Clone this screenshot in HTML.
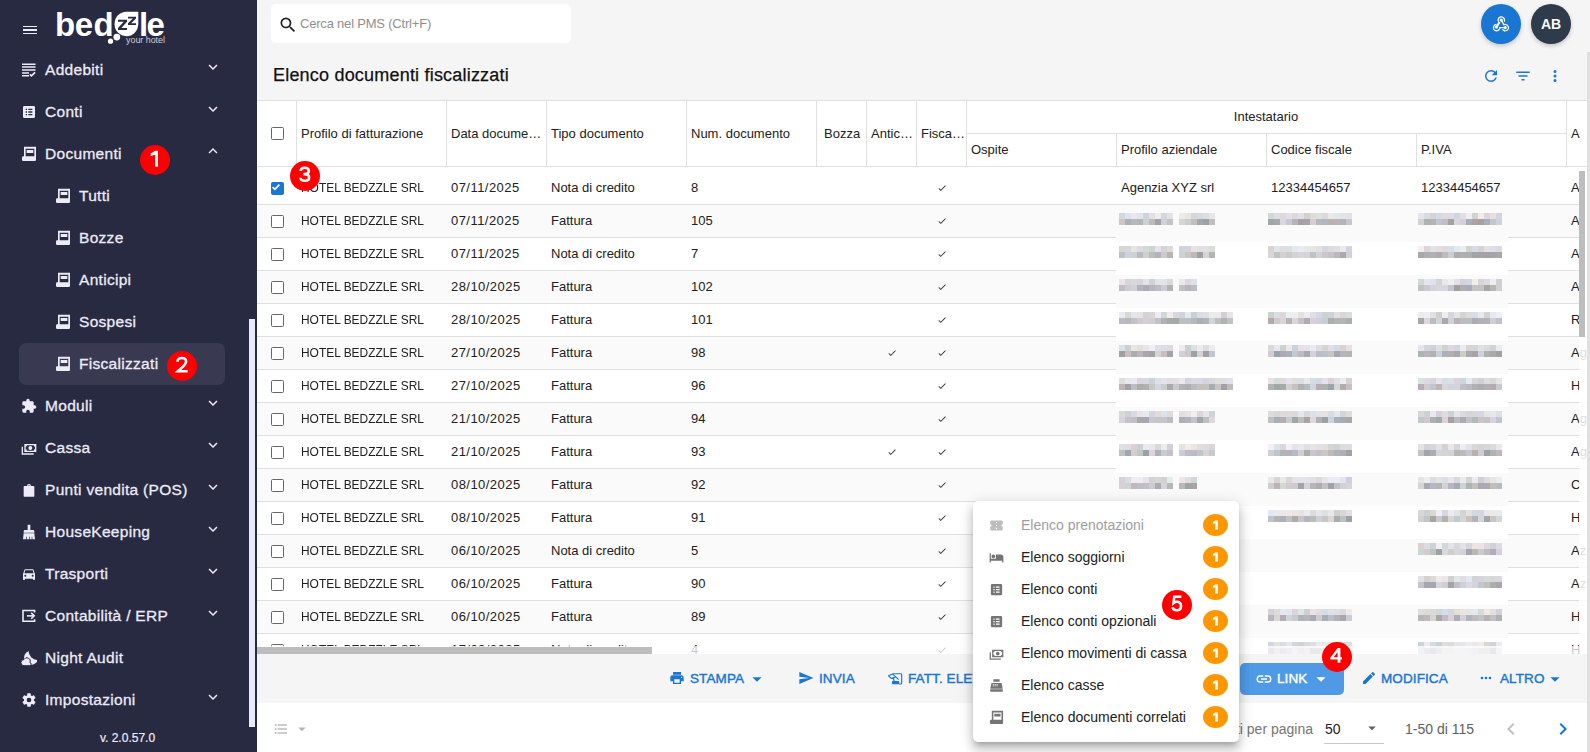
<!DOCTYPE html>
<html><head><meta charset="utf-8">
<style>
*{box-sizing:border-box;margin:0;padding:0}
html,body{width:1590px;height:752px;overflow:hidden;background:#f5f5f5;font-family:"Liberation Sans",sans-serif;color:#212121}
body{position:relative}
.a{position:absolute}
svg{display:block}
#sb{position:absolute;left:0;top:0;width:257px;height:752px;background:#282a41;color:#ecebf7;overflow:hidden}
.ni{position:absolute;left:0;width:257px;height:42px;font-size:15.5px;letter-spacing:0.3px;-webkit-text-stroke:0.3px #ecebf7}
.ni .ic{position:absolute;top:14px;left:21px}
.ni .tx{position:absolute;left:45px;top:12.5px;line-height:18px;white-space:nowrap}
.ni.sub .ic{left:55px}
.ni.sub .tx{left:79px}
.ni .chev{position:absolute;left:204px;top:9.5px}
.badge{position:absolute;width:30px;height:30px;border-radius:50%;background:#fe0000;color:#fff;font-weight:bold;font-size:21px;line-height:30px;text-align:center}
.tbl{position:absolute;left:257px;top:100px;width:1330px;height:554px;background:#fff;overflow:hidden}
.hd{position:absolute;font-size:13px;line-height:16px;white-space:nowrap;color:#212121}
.vl{position:absolute;width:1px;background:#e0e0e0}
.row{position:absolute;left:0;width:1330px;height:33px;border-bottom:1px solid #e0e0e0}
.cell{position:absolute;top:9px;font-size:13px;line-height:16px;white-space:nowrap;color:#212121}
.cb{position:absolute;left:14px;width:12.5px;height:12.5px;border:1.5px solid #666;border-radius:1.5px;background:#fff}
.blur{position:absolute;height:12px;opacity:.75}
.btn{position:absolute;top:654px;height:49px;font-size:14px;font-weight:bold;color:#1976d2;white-space:nowrap}
.mi{position:absolute;left:0;width:266px;height:32px;font-size:14px}
.mi .ic{position:absolute;left:16px;top:9px}
.mi .tx{position:absolute;left:48px;top:8px;line-height:16px;white-space:nowrap;color:#212121}
.mi .ob{position:absolute;left:230px;top:5px;width:25px;height:22px;border-radius:50%;background:#ff9800;color:#fff;font-weight:bold;font-size:13px;line-height:22px;text-align:center}
</style></head><body>

<div id="sb">
<div class="a" style="left:23px;top:25.6px;width:14px;height:1.5px;background:#ecebf7"></div>
<div class="a" style="left:23px;top:29.2px;width:14px;height:1.5px;background:#ecebf7"></div>
<div class="a" style="left:23px;top:32.8px;width:14px;height:1.5px;background:#ecebf7"></div>
<svg class="a" style="left:0;top:0" width="200" height="50">
<g font-family="Liberation Sans" font-weight="bold" font-size="33" fill="#fff">
<text x="55" y="36">b</text><text x="74.7" y="36">e</text><text x="93.5" y="36">d</text><text x="139" y="36">l</text><text x="146.4" y="36">e</text>
</g>
<path fill="#fff" d="M126.4,11.8H138.3V24.1A11.9,12.2 0 1 1 126.4,11.8Z"/>
<path fill="#282a41" d="M118,19.7H127V21.7L121.3,27.9H127V29.9H118V27.9L123.7,21.7H118Z M128,16.7H136V18.5L131.1,23.2H136V25H128V23.2L132.9,18.5H128Z"/>
<circle cx="116.8" cy="37.1" r="3.4" fill="#fff"/><circle cx="110.5" cy="41.2" r="2.6" fill="#fff"/>
<text x="126" y="42.6" font-family="Liberation Sans" font-size="8.3" fill="#cfcfd8" textLength="39" lengthAdjust="spacingAndGlyphs">your hotel</text>
</svg>
<div class="a" style="left:19px;top:343px;width:206px;height:42px;border-radius:7px;background:#393a52"></div>
<div class="ni" style="top:48px">
<div class="ic"><svg width="16" height="16" viewBox="0 0 24 24" ><path fill="#ecebf7" d="M1.5,2.3H21.8V4.6H1.5Z M1.5,6.5H21.8V8.8H1.5Z M1.5,10.7H21.8V13H1.5Z M1.5,15.2H12V17.5H1.5Z M1.5,19.4H12V21.7H1.5Z M20.2,14.6L22,16.4L15.6,22.6L12.4,19.4L14.2,17.6L15.6,19L20.2,14.6Z"/></svg></div>
<div class="tx">Addebiti</div>
<div class="chev" style="top:9.5px"><svg width="18" height="18" viewBox="0 0 24 24" ><path fill="#ecebf7" d="M7.41,8.58L12,13.17L16.59,8.58L18,10L12,16L6,10L7.41,8.58Z"/></svg></div>
</div>
<div class="ni" style="top:90px">
<div class="ic"><svg width="16" height="16" viewBox="0 0 24 24" ><path fill="#ecebf7" d="M19,3H5A2,2 0 0,0 3,5V19A2,2 0 0,0 5,21H19A2,2 0 0,0 21,19V5A2,2 0 0,0 19,3M7,7H9V9H7V7M7,11H9V13H7V11M7,15H9V17H7V15M17,17H11V15H17V17M17,13H11V11H17V13M17,9H11V7H17V9Z"/></svg></div>
<div class="tx">Conti</div>
<div class="chev" style="top:9.5px"><svg width="18" height="18" viewBox="0 0 24 24" ><path fill="#ecebf7" d="M7.41,8.58L12,13.17L16.59,8.58L18,10L12,16L6,10L7.41,8.58Z"/></svg></div>
</div>
<div class="ni" style="top:132px">
<div class="ic"><svg width="16" height="16" viewBox="0 0 24 24" ><g fill="#ecebf7"><path fill-rule="evenodd" d="M4.5,1H22.5V17H4.5Z M7,4H20V17H7Z"/><rect x="8.5" y="6" width="10" height="4.5"/><rect x="1.5" y="15.5" width="21" height="7" rx="1.8"/></g></svg></div>
<div class="tx">Documenti</div>
<div class="chev" style="top:10px"><svg width="18" height="18" viewBox="0 0 24 24" ><path fill="#ecebf7" d="M7.41,15.41L12,10.83L16.59,15.41L18,14L12,8L6,14L7.41,15.41Z"/></svg></div>
</div>
<div class="ni sub" style="top:174px">
<div class="ic"><svg width="16" height="16" viewBox="0 0 24 24" ><g fill="#ecebf7"><path fill-rule="evenodd" d="M4.5,1H22.5V17H4.5Z M7,4H20V17H7Z"/><rect x="8.5" y="6" width="10" height="4.5"/><rect x="1.5" y="15.5" width="21" height="7" rx="1.8"/></g></svg></div>
<div class="tx">Tutti</div>
</div>
<div class="ni sub" style="top:216px">
<div class="ic"><svg width="16" height="16" viewBox="0 0 24 24" ><g fill="#ecebf7"><path fill-rule="evenodd" d="M4.5,1H22.5V17H4.5Z M7,4H20V17H7Z"/><rect x="8.5" y="6" width="10" height="4.5"/><rect x="1.5" y="15.5" width="21" height="7" rx="1.8"/></g></svg></div>
<div class="tx">Bozze</div>
</div>
<div class="ni sub" style="top:258px">
<div class="ic"><svg width="16" height="16" viewBox="0 0 24 24" ><g fill="#ecebf7"><path fill-rule="evenodd" d="M4.5,1H22.5V17H4.5Z M7,4H20V17H7Z"/><rect x="8.5" y="6" width="10" height="4.5"/><rect x="1.5" y="15.5" width="21" height="7" rx="1.8"/></g></svg></div>
<div class="tx">Anticipi</div>
</div>
<div class="ni sub" style="top:300px">
<div class="ic"><svg width="16" height="16" viewBox="0 0 24 24" ><g fill="#ecebf7"><path fill-rule="evenodd" d="M4.5,1H22.5V17H4.5Z M7,4H20V17H7Z"/><rect x="8.5" y="6" width="10" height="4.5"/><rect x="1.5" y="15.5" width="21" height="7" rx="1.8"/></g></svg></div>
<div class="tx">Sospesi</div>
</div>
<div class="ni sub" style="top:342px">
<div class="ic"><svg width="16" height="16" viewBox="0 0 24 24" ><g fill="#ecebf7"><path fill-rule="evenodd" d="M4.5,1H22.5V17H4.5Z M7,4H20V17H7Z"/><rect x="8.5" y="6" width="10" height="4.5"/><rect x="1.5" y="15.5" width="21" height="7" rx="1.8"/></g></svg></div>
<div class="tx">Fiscalizzati</div>
</div>
<div class="ni" style="top:384px">
<div class="ic"><svg width="16" height="16" viewBox="0 0 24 24" ><path fill="#ecebf7" d="M20.5,11H19V7C19,5.89 18.1,5 17,5H13V3.5A2.5,2.5 0 0,0 10.5,1A2.5,2.5 0 0,0 8,3.5V5H4A2,2 0 0,0 2,7V10.8H3.5C5,10.8 6.2,12 6.2,13.5C6.2,15 5,16.2 3.5,16.2H2V20A2,2 0 0,0 4,22H7.8V20.5C7.8,19 9,17.8 10.5,17.8C12,17.8 13.2,19 13.2,20.5V22H17A2,2 0 0,0 19,20V16H20.5A2.5,2.5 0 0,0 23,13.5A2.5,2.5 0 0,0 20.5,11Z"/></svg></div>
<div class="tx">Moduli</div>
<div class="chev" style="top:9.5px"><svg width="18" height="18" viewBox="0 0 24 24" ><path fill="#ecebf7" d="M7.41,8.58L12,13.17L16.59,8.58L18,10L12,16L6,10L7.41,8.58Z"/></svg></div>
</div>
<div class="ni" style="top:426px">
<div class="ic"><svg width="16" height="16" viewBox="0 0 24 24" ><path fill="#ecebf7" d="M5,6H23V18H5V6M14,9A3,3 0 0,1 17,12A3,3 0 0,1 14,15A3,3 0 0,1 11,12A3,3 0 0,1 14,9M9,8A2,2 0 0,1 7,10V14A2,2 0 0,1 9,16H19A2,2 0 0,1 21,14V10A2,2 0 0,1 19,8H9M1,10H3V20H19V22H1V10Z"/></svg></div>
<div class="tx">Cassa</div>
<div class="chev" style="top:9.5px"><svg width="18" height="18" viewBox="0 0 24 24" ><path fill="#ecebf7" d="M7.41,8.58L12,13.17L16.59,8.58L18,10L12,16L6,10L7.41,8.58Z"/></svg></div>
</div>
<div class="ni" style="top:468px">
<div class="ic"><svg width="16" height="16" viewBox="0 0 24 24" ><path fill="#ecebf7" d="M9,6A3,3 0 0,1 15,6H13.2A1.2,1.2 0 0,0 10.8,6H9Z M5,6H19A1,1 0 0,1 20,7V21A1,1 0 0,1 19,22H5A1,1 0 0,1 4,21V7A1,1 0 0,1 5,6Z"/></svg></div>
<div class="tx">Punti vendita (POS)</div>
<div class="chev" style="top:9.5px"><svg width="18" height="18" viewBox="0 0 24 24" ><path fill="#ecebf7" d="M7.41,8.58L12,13.17L16.59,8.58L18,10L12,16L6,10L7.41,8.58Z"/></svg></div>
</div>
<div class="ni" style="top:510px">
<div class="ic"><svg width="16" height="16" viewBox="0 0 24 24" ><path fill="#ecebf7" d="M10,1H14V9H18A2,2 0 0,1 20,11V13H4V11A2,2 0 0,1 6,9H10V1M4,14H20L21,23H17V19H16V23H13V19H12V23H9V19H8V23H3L4,14Z"/></svg></div>
<div class="tx">HouseKeeping</div>
<div class="chev" style="top:9.5px"><svg width="18" height="18" viewBox="0 0 24 24" ><path fill="#ecebf7" d="M7.41,8.58L12,13.17L16.59,8.58L18,10L12,16L6,10L7.41,8.58Z"/></svg></div>
</div>
<div class="ni" style="top:552px">
<div class="ic"><svg width="16" height="16" viewBox="0 0 24 24" ><path fill="#ecebf7" d="M5,11L6.5,6.5H17.5L19,11M17.5,16A1.5,1.5 0 0,1 16,14.5A1.5,1.5 0 0,1 17.5,13A1.5,1.5 0 0,1 19,14.5A1.5,1.5 0 0,1 17.5,16M6.5,16A1.5,1.5 0 0,1 5,14.5A1.5,1.5 0 0,1 6.5,13A1.5,1.5 0 0,1 8,14.5A1.5,1.5 0 0,1 6.5,16M18.92,6C18.72,5.42 18.16,5 17.5,5H6.5C5.84,5 5.28,5.42 5.08,6L3,12V20A1,1 0 0,0 4,21H5A1,1 0 0,0 6,20V19H18V20A1,1 0 0,0 19,21H20A1,1 0 0,0 21,20V12L18.92,6Z"/></svg></div>
<div class="tx">Trasporti</div>
<div class="chev" style="top:9.5px"><svg width="18" height="18" viewBox="0 0 24 24" ><path fill="#ecebf7" d="M7.41,8.58L12,13.17L16.59,8.58L18,10L12,16L6,10L7.41,8.58Z"/></svg></div>
</div>
<div class="ni" style="top:594px">
<div class="ic"><svg width="16" height="16" viewBox="0 0 24 24" ><g fill="none" stroke="#ecebf7" stroke-width="2.4"><path d="M20.4,6.8V3.75H3V19.8H20.4V16.7"/><path d="M9,11.8H19.5"/><path d="M15.3,7.4L19.8,11.8L15.3,16.2"/></g></svg></div>
<div class="tx">Contabilità / ERP</div>
<div class="chev" style="top:9.5px"><svg width="18" height="18" viewBox="0 0 24 24" ><path fill="#ecebf7" d="M7.41,8.58L12,13.17L16.59,8.58L18,10L12,16L6,10L7.41,8.58Z"/></svg></div>
</div>
<div class="ni" style="top:636px">
<div class="ic"><svg width="16" height="16" viewBox="0 0 24 24" ><defs><mask id="mn"><rect x="-5" y="-5" width="34" height="34" fill="#fff"/><circle cx="25.44" cy="0.78" r="14.2" fill="#000"/></mask></defs><circle cx="15.15" cy="11.7" r="10.65" fill="#ecebf7" mask="url(#mn)"/><g stroke="#282a41" stroke-width="1.5" fill="#ecebf7"><path d="M4.5,23.5A4.6,4.6 0 0 1 4.5,14.3A4.8,4.8 0 0 1 13.4,18.8A2.4,2.4 0 0 1 13.4,23.5Z"/></g></svg></div>
<div class="tx">Night Audit</div>
</div>
<div class="ni" style="top:678px">
<div class="ic"><svg width="16" height="16" viewBox="0 0 24 24" ><path fill="#ecebf7" d="M12,15.5A3.5,3.5 0 0,1 8.5,12A3.5,3.5 0 0,1 12,8.5A3.5,3.5 0 0,1 15.5,12A3.5,3.5 0 0,1 12,15.5M19.43,12.97C19.47,12.65 19.5,12.33 19.5,12C19.5,11.670 19.47,11.34 19.43,11L21.54,9.37C21.73,9.22 21.78,8.95 21.66,8.73L19.66,5.27C19.54,5.05 19.27,4.96 19.05,5.05L16.56,6.05C16.04,5.66 15.5,5.32 14.87,5.07L14.5,2.42C14.46,2.18 14.25,2 14,2H10C9.75,2 9.54,2.18 9.5,2.42L9.13,5.07C8.5,5.32 7.96,5.66 7.44,6.05L4.95,5.05C4.73,4.96 4.46,5.05 4.34,5.27L2.34,8.73C2.21,8.95 2.27,9.22 2.46,9.37L4.57,11C4.53,11.34 4.5,11.67 4.5,12C4.5,12.33 4.53,12.65 4.57,12.97L2.46,14.63C2.27,14.78 2.21,15.05 2.34,15.27L4.34,18.73C4.46,18.95 4.73,19.03 4.95,18.95L7.44,17.94C7.96,18.34 8.5,18.68 9.13,18.93L9.5,21.58C9.54,21.82 9.75,22 10,22H14C14.25,22 14.46,21.82 14.5,21.58L14.87,18.93C15.5,18.67 16.04,18.34 16.56,17.94L19.05,18.95C19.27,19.03 19.54,18.95 19.66,18.73L21.66,15.27C21.78,15.05 21.73,14.78 21.54,14.63L19.43,12.97Z"/></svg></div>
<div class="tx">Impostazioni</div>
<div class="chev" style="top:9.5px"><svg width="18" height="18" viewBox="0 0 24 24" ><path fill="#ecebf7" d="M7.41,8.58L12,13.17L16.59,8.58L18,10L12,16L6,10L7.41,8.58Z"/></svg></div>
</div>
<div class="a" style="left:-1px;top:730px;width:257px;text-align:center;font-size:12px;line-height:16px;color:#ecebf7;-webkit-text-stroke:0.2px #ecebf7">v. 2.0.57.0</div>
<div class="a" style="left:249px;top:319px;width:6px;height:408px;background:#e9e9f7"></div>
</div>
<div class="a" style="left:271px;top:4px;width:300px;height:39px;background:#fff;border-radius:5px"></div>
<div class="a" style="left:277.5px;top:14.5px"><svg width="20" height="20" viewBox="0 0 24 24" ><path fill="#212121" d="M9.5,3A6.5,6.5 0 0,1 16,9.5C16,11.11 15.41,12.59 14.44,13.73L14.71,14H15.5L20.5,19L19,20.5L14,15.5V14.71L13.73,14.44C12.59,15.41 11.11,16 9.5,16A6.5,6.5 0 0,1 3,9.5A6.5,6.5 0 0,1 9.5,3M9.5,5C7,5 5,7 5,9.5C5,12 7,14 9.5,14C12,14 14,12 14,9.5C14,7 12,5 9.5,5Z"/></svg></div>
<div class="a" style="left:300px;top:16px;font-size:13px;line-height:16px;color:#8f8f8f;letter-spacing:-0.2px">Cerca nel PMS (Ctrl+F)</div>
<div class="a" style="left:1481px;top:4px;width:40px;height:40px;border-radius:50%;background:#1976d2;box-shadow:0 2px 4px rgba(0,0,0,.2)"><div class="a" style="left:10px;top:10px"><svg width="20" height="20" viewBox="0 0 24 24" ><path fill="#fff" d="M10.46,19C9,21.07 6.15,21.59 4.09,20.15C2.04,18.71 1.56,15.84 3,13.75C3.87,12.5 5.21,11.83 6.58,11.77L6.63,13.2C5.72,13.27 4.84,13.74 4.27,14.56C3.27,16 3.58,17.94 4.95,18.91C6.33,19.87 8.26,19.5 9.26,18.070C9.57,17.62 9.75,17.13 9.82,16.63V15.62L15.4,15.58L15.47,15.47C16,14.55 17.15,14.23 18.05,14.75C18.95,15.27 19.26,16.43 18.73,17.35C18.2,18.26 17.04,18.58 16.14,18.06C15.73,17.83 15.44,17.46 15.31,17.04L11.24,17.06C11.13,17.73 10.87,18.38 10.46,19M17.74,11.86C20.27,12.17 22.07,14.44 21.76,16.93C21.45,19.43 19.15,21.2 16.62,20.89C15.13,20.71 13.9,19.86 13.19,18.68L14.43,17.96C14.92,18.73 15.75,19.28 16.75,19.41C18.5,19.62 20.05,18.43 20.26,16.76C20.47,15.09 19.23,13.56 17.5,13.35C16.96,13.29 16.44,13.36 15.97,13.53L15.12,13.97L12.54,9.2H12.32C11.26,9.17 10.44,8.29 10.47,7.25C10.5,6.21 11.4,5.4 12.45,5.44C13.5,5.5 14.33,6.35 14.3,7.39C14.28,7.83 14.11,8.23 13.84,8.54L15.74,12.05C16.36,11.85 17.04,11.78 17.74,11.86M8.25,9.14C7.25,6.79 8.31,4.1 10.62,3.12C12.94,2.14 15.62,3.25 16.62,5.6C17.21,6.97 17.09,8.47 16.42,9.67L15.18,8.95C15.6,8.14 15.67,7.15 15.27,6.22C14.59,4.62 12.78,3.85 11.23,4.5C9.67,5.16 8.97,7 9.65,8.6C9.93,9.26 10.4,9.77 10.97,10.11L11.36,10.32L8.33,15.31C8.36,15.36 8.38,15.42 8.4,15.5C8.5,16.5 7.74,17.43 6.7,17.5C5.66,17.6 4.72,16.84 4.63,15.8C4.53,14.76 5.31,13.83 6.36,13.74C6.39,13.74 6.41,13.74 6.44,13.74L8.92,9.66C8.64,9.5 8.41,9.32 8.25,9.14Z"/></svg></div></div>
<div class="a" style="left:1531px;top:4px;width:40px;height:40px;border-radius:50%;background:#2d3b4b;box-shadow:0 2px 4px rgba(0,0,0,.2);color:#fff;font-weight:bold;font-size:14px;line-height:40px;text-align:center">AB</div>
<div class="a" style="left:273px;top:65px;font-size:18px;line-height:20px;color:#111;-webkit-text-stroke:0.25px #111;letter-spacing:0.2px">Elenco documenti fiscalizzati</div>
<div class="a" style="left:1482px;top:67px"><svg width="18" height="18" viewBox="0 0 24 24" ><path fill="#1976d2" d="M17.65,6.35C16.2,4.9 14.21,4 12,4A8,8 0 0,0 4,12A8,8 0 0,0 12,20C15.73,20 18.84,17.45 19.73,14H17.65C16.83,16.33 14.61,18 12,18A6,6 0 0,1 6,12A6,6 0 0,1 12,6C13.66,6 15.14,6.69 16.22,7.78L13,11H20V4L17.65,6.35Z"/></svg></div>
<div class="a" style="left:1514px;top:67px"><svg width="18" height="18" viewBox="0 0 24 24" ><path fill="#1976d2" d="M6,13H18V11H6M3,6V8H21V6M10,18H14V16H10V18Z"/></svg></div>
<div class="a" style="left:1546px;top:67px"><svg width="18" height="18" viewBox="0 0 24 24" ><path fill="#1976d2" d="M12,16A2,2 0 0,1 14,18A2,2 0 0,1 12,20A2,2 0 0,1 10,18A2,2 0 0,1 12,16M12,10A2,2 0 0,1 14,12A2,2 0 0,1 12,14A2,2 0 0,1 10,12A2,2 0 0,1 12,10M12,4A2,2 0 0,1 14,6A2,2 0 0,1 12,8A2,2 0 0,1 10,6A2,2 0 0,1 12,4Z"/></svg></div>
<div class="a" style="left:1587px;top:52px;width:3px;height:700px;background:#e0e0e0"></div>
<div class="tbl">
<div class="vl" style="left:39px;top:0;height:66px"></div>
<div class="vl" style="left:189px;top:0;height:66px"></div>
<div class="vl" style="left:289px;top:0;height:66px"></div>
<div class="vl" style="left:429px;top:0;height:66px"></div>
<div class="vl" style="left:559px;top:0;height:66px"></div>
<div class="vl" style="left:609px;top:0;height:66px"></div>
<div class="vl" style="left:659px;top:0;height:66px"></div>
<div class="vl" style="left:709px;top:0;height:66px"></div>
<div class="vl" style="left:1309px;top:0;height:66px"></div>
<div class="vl" style="left:859px;top:33px;height:33px"></div>
<div class="vl" style="left:1009px;top:33px;height:33px"></div>
<div class="vl" style="left:1159px;top:33px;height:33px"></div>
<div class="a" style="left:709px;top:33px;width:600px;height:1px;background:#e0e0e0"></div>
<div class="a" style="left:0;top:0;width:1330px;height:1px;background:#e0e0e0"></div>
<div class="a" style="left:0;top:66px;width:1330px;height:1px;background:#e0e0e0"></div>
<div class="cb" style="top:27px"></div>
<div class="hd" style="left:44px;top:26px">Profilo di fatturazione</div>
<div class="hd" style="left:194px;top:26px">Data docume…</div>
<div class="hd" style="left:294px;top:26px">Tipo documento</div>
<div class="hd" style="left:434px;top:26px">Num. documento</div>
<div class="hd" style="left:567px;top:26px">Bozza</div>
<div class="hd" style="left:614px;top:26px">Antic…</div>
<div class="hd" style="left:664px;top:26px">Fisca…</div>
<div class="hd" style="left:714px;top:42px">Ospite</div>
<div class="hd" style="left:864px;top:42px">Profilo aziendale</div>
<div class="hd" style="left:1014px;top:42px">Codice fiscale</div>
<div class="hd" style="left:1164px;top:42px">P.IVA</div>
<div class="hd" style="left:1314px;top:26px">A</div>
<div class="hd" style="left:709px;width:600px;text-align:center;top:9px">Intestatario</div>
<div class="row" style="top:67px;height:38px;background:#fff">
<div class="cb" style="top:15px;background:#1976d2;border-color:#1976d2"><div class="a" style="left:-0.5px;top:-0.5px"><svg width="12" height="12" viewBox="0 0 12 12" style="position:absolute;left:-1.5px;top:-1.5px"><path d="M2.6,6.2L4.9,8.4L9.4,3.6" fill="none" stroke="#fff" stroke-width="1.7"/></svg></div></div>
<div class="cell" style="left:44px;top:13px;transform:scaleX(0.918);transform-origin:0 0">HOTEL BEDZZLE SRL</div>
<div class="cell" style="left:194px;top:13px;letter-spacing:0.45px">07/11/2025</div>
<div class="cell" style="left:294px;top:13px">Nota di credito</div>
<div class="cell" style="left:434px;top:13px">8</div>
<div class="a" style="left:680px;top:15.5px"><svg width="10" height="10" viewBox="0 0 24 24" ><path fill="#333" d="M21,7L9,19L3.5,13.5L4.91,12.09L9,16.17L19.59,5.59L21,7Z"/></svg></div>
<div class="cell" style="left:1314px;top:13px">A</div>
<div class="cell" style="left:864px;top:13px">Agenzia XYZ srl</div>
<div class="cell" style="left:1014px;top:13px">12334454657</div>
<div class="cell" style="left:1164px;top:13px">12334454657</div>
</div>
<div class="row" style="top:105px;height:33px;background:#fafafa">
<div class="cb" style="top:10px"></div>
<div class="cell" style="left:44px;top:8px;transform:scaleX(0.918);transform-origin:0 0">HOTEL BEDZZLE SRL</div>
<div class="cell" style="left:194px;top:8px;letter-spacing:0.45px">07/11/2025</div>
<div class="cell" style="left:294px;top:8px">Fattura</div>
<div class="cell" style="left:434px;top:8px">105</div>
<div class="a" style="left:680px;top:10.5px"><svg width="10" height="10" viewBox="0 0 24 24" ><path fill="#333" d="M21,7L9,19L3.5,13.5L4.91,12.09L9,16.17L19.59,5.59L21,7Z"/></svg></div>
<div class="cell" style="left:1314px;top:8px">A</div>
</div>
<div class="row" style="top:138px;height:33px;background:#fff">
<div class="cb" style="top:10px"></div>
<div class="cell" style="left:44px;top:8px;transform:scaleX(0.918);transform-origin:0 0">HOTEL BEDZZLE SRL</div>
<div class="cell" style="left:194px;top:8px;letter-spacing:0.45px">07/11/2025</div>
<div class="cell" style="left:294px;top:8px">Nota di credito</div>
<div class="cell" style="left:434px;top:8px">7</div>
<div class="a" style="left:680px;top:10.5px"><svg width="10" height="10" viewBox="0 0 24 24" ><path fill="#333" d="M21,7L9,19L3.5,13.5L4.91,12.09L9,16.17L19.59,5.59L21,7Z"/></svg></div>
<div class="cell" style="left:1314px;top:8px">A</div>
</div>
<div class="row" style="top:171px;height:33px;background:#fafafa">
<div class="cb" style="top:10px"></div>
<div class="cell" style="left:44px;top:8px;transform:scaleX(0.918);transform-origin:0 0">HOTEL BEDZZLE SRL</div>
<div class="cell" style="left:194px;top:8px;letter-spacing:0.45px">28/10/2025</div>
<div class="cell" style="left:294px;top:8px">Fattura</div>
<div class="cell" style="left:434px;top:8px">102</div>
<div class="a" style="left:680px;top:10.5px"><svg width="10" height="10" viewBox="0 0 24 24" ><path fill="#333" d="M21,7L9,19L3.5,13.5L4.91,12.09L9,16.17L19.59,5.59L21,7Z"/></svg></div>
<div class="cell" style="left:1314px;top:8px">A</div>
</div>
<div class="row" style="top:204px;height:33px;background:#fff">
<div class="cb" style="top:10px"></div>
<div class="cell" style="left:44px;top:8px;transform:scaleX(0.918);transform-origin:0 0">HOTEL BEDZZLE SRL</div>
<div class="cell" style="left:194px;top:8px;letter-spacing:0.45px">28/10/2025</div>
<div class="cell" style="left:294px;top:8px">Fattura</div>
<div class="cell" style="left:434px;top:8px">101</div>
<div class="a" style="left:680px;top:10.5px"><svg width="10" height="10" viewBox="0 0 24 24" ><path fill="#333" d="M21,7L9,19L3.5,13.5L4.91,12.09L9,16.17L19.59,5.59L21,7Z"/></svg></div>
<div class="cell" style="left:1314px;top:8px">R</div>
</div>
<div class="row" style="top:237px;height:33px;background:#fafafa">
<div class="cb" style="top:10px"></div>
<div class="cell" style="left:44px;top:8px;transform:scaleX(0.918);transform-origin:0 0">HOTEL BEDZZLE SRL</div>
<div class="cell" style="left:194px;top:8px;letter-spacing:0.45px">27/10/2025</div>
<div class="cell" style="left:294px;top:8px">Fattura</div>
<div class="cell" style="left:434px;top:8px">98</div>
<div class="a" style="left:630px;top:10.5px"><svg width="10" height="10" viewBox="0 0 24 24" ><path fill="#333" d="M21,7L9,19L3.5,13.5L4.91,12.09L9,16.17L19.59,5.59L21,7Z"/></svg></div>
<div class="a" style="left:680px;top:10.5px"><svg width="10" height="10" viewBox="0 0 24 24" ><path fill="#333" d="M21,7L9,19L3.5,13.5L4.91,12.09L9,16.17L19.59,5.59L21,7Z"/></svg></div>
<div class="cell" style="left:1314px;top:8px">Ag</div>
</div>
<div class="row" style="top:270px;height:33px;background:#fff">
<div class="cb" style="top:10px"></div>
<div class="cell" style="left:44px;top:8px;transform:scaleX(0.918);transform-origin:0 0">HOTEL BEDZZLE SRL</div>
<div class="cell" style="left:194px;top:8px;letter-spacing:0.45px">27/10/2025</div>
<div class="cell" style="left:294px;top:8px">Fattura</div>
<div class="cell" style="left:434px;top:8px">96</div>
<div class="a" style="left:680px;top:10.5px"><svg width="10" height="10" viewBox="0 0 24 24" ><path fill="#333" d="M21,7L9,19L3.5,13.5L4.91,12.09L9,16.17L19.59,5.59L21,7Z"/></svg></div>
<div class="cell" style="left:1314px;top:8px">H</div>
</div>
<div class="row" style="top:303px;height:33px;background:#fafafa">
<div class="cb" style="top:10px"></div>
<div class="cell" style="left:44px;top:8px;transform:scaleX(0.918);transform-origin:0 0">HOTEL BEDZZLE SRL</div>
<div class="cell" style="left:194px;top:8px;letter-spacing:0.45px">21/10/2025</div>
<div class="cell" style="left:294px;top:8px">Fattura</div>
<div class="cell" style="left:434px;top:8px">94</div>
<div class="a" style="left:680px;top:10.5px"><svg width="10" height="10" viewBox="0 0 24 24" ><path fill="#333" d="M21,7L9,19L3.5,13.5L4.91,12.09L9,16.17L19.59,5.59L21,7Z"/></svg></div>
<div class="cell" style="left:1314px;top:8px">Ag</div>
</div>
<div class="row" style="top:336px;height:33px;background:#fff">
<div class="cb" style="top:10px"></div>
<div class="cell" style="left:44px;top:8px;transform:scaleX(0.918);transform-origin:0 0">HOTEL BEDZZLE SRL</div>
<div class="cell" style="left:194px;top:8px;letter-spacing:0.45px">21/10/2025</div>
<div class="cell" style="left:294px;top:8px">Fattura</div>
<div class="cell" style="left:434px;top:8px">93</div>
<div class="a" style="left:630px;top:10.5px"><svg width="10" height="10" viewBox="0 0 24 24" ><path fill="#333" d="M21,7L9,19L3.5,13.5L4.91,12.09L9,16.17L19.59,5.59L21,7Z"/></svg></div>
<div class="a" style="left:680px;top:10.5px"><svg width="10" height="10" viewBox="0 0 24 24" ><path fill="#333" d="M21,7L9,19L3.5,13.5L4.91,12.09L9,16.17L19.59,5.59L21,7Z"/></svg></div>
<div class="cell" style="left:1314px;top:8px">Ag</div>
</div>
<div class="row" style="top:369px;height:33px;background:#fafafa">
<div class="cb" style="top:10px"></div>
<div class="cell" style="left:44px;top:8px;transform:scaleX(0.918);transform-origin:0 0">HOTEL BEDZZLE SRL</div>
<div class="cell" style="left:194px;top:8px;letter-spacing:0.45px">08/10/2025</div>
<div class="cell" style="left:294px;top:8px">Fattura</div>
<div class="cell" style="left:434px;top:8px">92</div>
<div class="a" style="left:680px;top:10.5px"><svg width="10" height="10" viewBox="0 0 24 24" ><path fill="#333" d="M21,7L9,19L3.5,13.5L4.91,12.09L9,16.17L19.59,5.59L21,7Z"/></svg></div>
<div class="cell" style="left:1314px;top:8px">C</div>
</div>
<div class="row" style="top:402px;height:33px;background:#fff">
<div class="cb" style="top:10px"></div>
<div class="cell" style="left:44px;top:8px;transform:scaleX(0.918);transform-origin:0 0">HOTEL BEDZZLE SRL</div>
<div class="cell" style="left:194px;top:8px;letter-spacing:0.45px">08/10/2025</div>
<div class="cell" style="left:294px;top:8px">Fattura</div>
<div class="cell" style="left:434px;top:8px">91</div>
<div class="a" style="left:680px;top:10.5px"><svg width="10" height="10" viewBox="0 0 24 24" ><path fill="#333" d="M21,7L9,19L3.5,13.5L4.91,12.09L9,16.17L19.59,5.59L21,7Z"/></svg></div>
<div class="cell" style="left:1314px;top:8px">H</div>
</div>
<div class="row" style="top:435px;height:33px;background:#fafafa">
<div class="cb" style="top:10px"></div>
<div class="cell" style="left:44px;top:8px;transform:scaleX(0.918);transform-origin:0 0">HOTEL BEDZZLE SRL</div>
<div class="cell" style="left:194px;top:8px;letter-spacing:0.45px">06/10/2025</div>
<div class="cell" style="left:294px;top:8px">Nota di credito</div>
<div class="cell" style="left:434px;top:8px">5</div>
<div class="a" style="left:680px;top:10.5px"><svg width="10" height="10" viewBox="0 0 24 24" ><path fill="#333" d="M21,7L9,19L3.5,13.5L4.91,12.09L9,16.17L19.59,5.59L21,7Z"/></svg></div>
<div class="cell" style="left:1314px;top:8px">Az</div>
</div>
<div class="row" style="top:468px;height:33px;background:#fff">
<div class="cb" style="top:10px"></div>
<div class="cell" style="left:44px;top:8px;transform:scaleX(0.918);transform-origin:0 0">HOTEL BEDZZLE SRL</div>
<div class="cell" style="left:194px;top:8px;letter-spacing:0.45px">06/10/2025</div>
<div class="cell" style="left:294px;top:8px">Fattura</div>
<div class="cell" style="left:434px;top:8px">90</div>
<div class="a" style="left:680px;top:10.5px"><svg width="10" height="10" viewBox="0 0 24 24" ><path fill="#333" d="M21,7L9,19L3.5,13.5L4.91,12.09L9,16.17L19.59,5.59L21,7Z"/></svg></div>
<div class="cell" style="left:1314px;top:8px">Az</div>
</div>
<div class="row" style="top:501px;height:33px;background:#fafafa">
<div class="cb" style="top:10px"></div>
<div class="cell" style="left:44px;top:8px;transform:scaleX(0.918);transform-origin:0 0">HOTEL BEDZZLE SRL</div>
<div class="cell" style="left:194px;top:8px;letter-spacing:0.45px">06/10/2025</div>
<div class="cell" style="left:294px;top:8px">Fattura</div>
<div class="cell" style="left:434px;top:8px">89</div>
<div class="a" style="left:680px;top:10.5px"><svg width="10" height="10" viewBox="0 0 24 24" ><path fill="#333" d="M21,7L9,19L3.5,13.5L4.91,12.09L9,16.17L19.59,5.59L21,7Z"/></svg></div>
<div class="cell" style="left:1314px;top:8px">H</div>
</div>
<div class="row" style="top:534px;height:33px;background:#fff">
<div class="cb" style="top:10px"></div>
<div class="cell" style="left:44px;top:8px;transform:scaleX(0.918);transform-origin:0 0">HOTEL BEDZZLE SRL</div>
<div class="cell" style="left:194px;top:8px;letter-spacing:0.45px">17/09/2025</div>
<div class="cell" style="left:294px;top:8px">Nota di credito</div>
<div class="cell" style="left:434px;top:8px">4</div>
<div class="a" style="left:680px;top:10.5px"><svg width="10" height="10" viewBox="0 0 24 24" ><path fill="#333" d="M21,7L9,19L3.5,13.5L4.91,12.09L9,16.17L19.59,5.59L21,7Z"/></svg></div>
<div class="cell" style="left:1314px;top:8px">H</div>
</div>
<div class="a" style="left:859px;top:105px;width:392px;height:442px;overflow:hidden">
<div class="a" style="left:0;top:4px;width:392px;height:33px;background:#fafafa"></div>
<div class="a" style="left:0;top:37px;width:392px;height:33px;background:#fff"></div>
<div class="a" style="left:0;top:70px;width:392px;height:33px;background:#fafafa"></div>
<div class="a" style="left:0;top:103px;width:392px;height:33px;background:#fff"></div>
<div class="a" style="left:0;top:136px;width:392px;height:33px;background:#fafafa"></div>
<div class="a" style="left:0;top:169px;width:392px;height:33px;background:#fff"></div>
<div class="a" style="left:0;top:202px;width:392px;height:33px;background:#fafafa"></div>
<div class="a" style="left:0;top:235px;width:392px;height:33px;background:#fff"></div>
<div class="a" style="left:0;top:268px;width:392px;height:33px;background:#fafafa"></div>
<div class="a" style="left:0;top:301px;width:392px;height:33px;background:#fff"></div>
<div class="a" style="left:0;top:334px;width:392px;height:33px;background:#fafafa"></div>
<div class="a" style="left:0;top:367px;width:392px;height:33px;background:#fff"></div>
<div class="a" style="left:0;top:400px;width:392px;height:33px;background:#fafafa"></div>
<div class="a" style="left:0;top:433px;width:392px;height:33px;background:#fff"></div>
<div class="a" style="left:0;top:0;width:392px;height:4px;background:#fafafa"></div>
</div>
<div class="a" style="left:859px;top:104px;width:392px;height:450px">
<div class="a" style="left:3px;top:9px;width:6px;height:6px;background:rgb(211,215,222)"></div><div class="a" style="left:3px;top:15px;width:6px;height:6px;background:rgb(205,198,196)"></div><div class="a" style="left:9px;top:9px;width:6px;height:6px;background:rgb(219,227,238)"></div><div class="a" style="left:9px;top:15px;width:6px;height:6px;background:rgb(175,176,178)"></div><div class="a" style="left:15px;top:9px;width:6px;height:6px;background:rgb(237,230,241)"></div><div class="a" style="left:15px;top:15px;width:6px;height:6px;background:rgb(181,185,188)"></div><div class="a" style="left:21px;top:9px;width:6px;height:6px;background:rgb(224,228,240)"></div><div class="a" style="left:21px;top:15px;width:6px;height:6px;background:rgb(176,184,182)"></div><div class="a" style="left:27px;top:9px;width:6px;height:6px;background:rgb(206,213,218)"></div><div class="a" style="left:27px;top:15px;width:6px;height:6px;background:rgb(201,209,213)"></div><div class="a" style="left:33px;top:9px;width:6px;height:6px;background:rgb(227,223,232)"></div><div class="a" style="left:33px;top:15px;width:6px;height:6px;background:rgb(191,185,185)"></div><div class="a" style="left:39px;top:9px;width:6px;height:6px;background:rgb(239,236,235)"></div><div class="a" style="left:39px;top:15px;width:6px;height:6px;background:rgb(158,162,173)"></div><div class="a" style="left:45px;top:9px;width:6px;height:6px;background:rgb(214,214,223)"></div><div class="a" style="left:45px;top:15px;width:6px;height:6px;background:rgb(210,209,218)"></div><div class="a" style="left:51px;top:9px;width:6px;height:6px;background:rgb(228,224,231)"></div><div class="a" style="left:51px;top:15px;width:6px;height:6px;background:rgb(199,194,197)"></div>
<div class="a" style="left:63px;top:9px;width:6px;height:6px;background:rgb(238,236,232)"></div><div class="a" style="left:63px;top:15px;width:6px;height:6px;background:rgb(214,214,215)"></div><div class="a" style="left:69px;top:9px;width:6px;height:6px;background:rgb(232,230,229)"></div><div class="a" style="left:69px;top:15px;width:6px;height:6px;background:rgb(203,205,209)"></div><div class="a" style="left:75px;top:9px;width:6px;height:6px;background:rgb(212,217,215)"></div><div class="a" style="left:75px;top:15px;width:6px;height:6px;background:rgb(197,190,188)"></div><div class="a" style="left:81px;top:9px;width:6px;height:6px;background:rgb(213,219,228)"></div><div class="a" style="left:81px;top:15px;width:6px;height:6px;background:rgb(161,169,174)"></div><div class="a" style="left:87px;top:9px;width:6px;height:6px;background:rgb(226,221,220)"></div><div class="a" style="left:87px;top:15px;width:6px;height:6px;background:rgb(155,162,170)"></div><div class="a" style="left:93px;top:9px;width:6px;height:6px;background:rgb(232,230,234)"></div><div class="a" style="left:93px;top:15px;width:6px;height:6px;background:rgb(191,192,189)"></div>
<div class="a" style="left:152px;top:9px;width:6px;height:6px;background:rgb(209,217,215)"></div><div class="a" style="left:152px;top:15px;width:6px;height:6px;background:rgb(159,166,168)"></div><div class="a" style="left:158px;top:9px;width:6px;height:6px;background:rgb(222,221,225)"></div><div class="a" style="left:158px;top:15px;width:6px;height:6px;background:rgb(162,169,175)"></div><div class="a" style="left:164px;top:9px;width:6px;height:6px;background:rgb(221,218,218)"></div><div class="a" style="left:164px;top:15px;width:6px;height:6px;background:rgb(219,215,223)"></div><div class="a" style="left:170px;top:9px;width:6px;height:6px;background:rgb(230,222,230)"></div><div class="a" style="left:170px;top:15px;width:6px;height:6px;background:rgb(196,201,213)"></div><div class="a" style="left:176px;top:9px;width:6px;height:6px;background:rgb(221,216,219)"></div><div class="a" style="left:176px;top:15px;width:6px;height:6px;background:rgb(184,179,183)"></div><div class="a" style="left:182px;top:9px;width:6px;height:6px;background:rgb(225,224,230)"></div><div class="a" style="left:182px;top:15px;width:6px;height:6px;background:rgb(165,160,166)"></div><div class="a" style="left:188px;top:9px;width:6px;height:6px;background:rgb(212,208,208)"></div><div class="a" style="left:188px;top:15px;width:6px;height:6px;background:rgb(165,163,173)"></div><div class="a" style="left:194px;top:9px;width:6px;height:6px;background:rgb(222,219,223)"></div><div class="a" style="left:194px;top:15px;width:6px;height:6px;background:rgb(214,207,203)"></div><div class="a" style="left:200px;top:9px;width:6px;height:6px;background:rgb(219,226,222)"></div><div class="a" style="left:200px;top:15px;width:6px;height:6px;background:rgb(183,183,193)"></div><div class="a" style="left:206px;top:9px;width:6px;height:6px;background:rgb(219,217,218)"></div><div class="a" style="left:206px;top:15px;width:6px;height:6px;background:rgb(180,183,189)"></div><div class="a" style="left:212px;top:9px;width:6px;height:6px;background:rgb(235,232,236)"></div><div class="a" style="left:212px;top:15px;width:6px;height:6px;background:rgb(183,179,178)"></div><div class="a" style="left:218px;top:9px;width:6px;height:6px;background:rgb(224,232,232)"></div><div class="a" style="left:218px;top:15px;width:6px;height:6px;background:rgb(187,179,182)"></div><div class="a" style="left:224px;top:9px;width:6px;height:6px;background:rgb(228,228,231)"></div><div class="a" style="left:224px;top:15px;width:6px;height:6px;background:rgb(177,180,189)"></div><div class="a" style="left:230px;top:9px;width:6px;height:6px;background:rgb(223,228,227)"></div><div class="a" style="left:230px;top:15px;width:6px;height:6px;background:rgb(200,198,204)"></div>
<div class="a" style="left:302px;top:9px;width:6px;height:6px;background:rgb(228,229,239)"></div><div class="a" style="left:302px;top:15px;width:6px;height:6px;background:rgb(208,211,209)"></div><div class="a" style="left:308px;top:9px;width:6px;height:6px;background:rgb(216,218,228)"></div><div class="a" style="left:308px;top:15px;width:6px;height:6px;background:rgb(176,177,176)"></div><div class="a" style="left:314px;top:9px;width:6px;height:6px;background:rgb(217,209,211)"></div><div class="a" style="left:314px;top:15px;width:6px;height:6px;background:rgb(177,180,184)"></div><div class="a" style="left:320px;top:9px;width:6px;height:6px;background:rgb(212,218,225)"></div><div class="a" style="left:320px;top:15px;width:6px;height:6px;background:rgb(193,197,206)"></div><div class="a" style="left:326px;top:9px;width:6px;height:6px;background:rgb(225,217,221)"></div><div class="a" style="left:326px;top:15px;width:6px;height:6px;background:rgb(192,189,198)"></div><div class="a" style="left:332px;top:9px;width:6px;height:6px;background:rgb(222,217,226)"></div><div class="a" style="left:332px;top:15px;width:6px;height:6px;background:rgb(167,162,162)"></div><div class="a" style="left:338px;top:9px;width:6px;height:6px;background:rgb(206,214,225)"></div><div class="a" style="left:338px;top:15px;width:6px;height:6px;background:rgb(221,213,222)"></div><div class="a" style="left:344px;top:9px;width:6px;height:6px;background:rgb(224,225,222)"></div><div class="a" style="left:344px;top:15px;width:6px;height:6px;background:rgb(213,207,219)"></div><div class="a" style="left:350px;top:9px;width:6px;height:6px;background:rgb(239,238,244)"></div><div class="a" style="left:350px;top:15px;width:6px;height:6px;background:rgb(168,174,179)"></div><div class="a" style="left:356px;top:9px;width:6px;height:6px;background:rgb(210,211,208)"></div><div class="a" style="left:356px;top:15px;width:6px;height:6px;background:rgb(170,162,164)"></div><div class="a" style="left:362px;top:9px;width:6px;height:6px;background:rgb(241,236,233)"></div><div class="a" style="left:362px;top:15px;width:6px;height:6px;background:rgb(167,160,159)"></div><div class="a" style="left:368px;top:9px;width:6px;height:6px;background:rgb(221,213,218)"></div><div class="a" style="left:368px;top:15px;width:6px;height:6px;background:rgb(167,175,187)"></div><div class="a" style="left:374px;top:9px;width:6px;height:6px;background:rgb(230,225,222)"></div><div class="a" style="left:374px;top:15px;width:6px;height:6px;background:rgb(194,199,205)"></div><div class="a" style="left:380px;top:9px;width:6px;height:6px;background:rgb(212,212,223)"></div><div class="a" style="left:380px;top:15px;width:6px;height:6px;background:rgb(204,211,218)"></div>
<div class="a" style="left:3px;top:42px;width:6px;height:6px;background:rgb(213,215,214)"></div><div class="a" style="left:3px;top:48px;width:6px;height:6px;background:rgb(189,194,195)"></div><div class="a" style="left:9px;top:42px;width:6px;height:6px;background:rgb(215,215,215)"></div><div class="a" style="left:9px;top:48px;width:6px;height:6px;background:rgb(204,212,223)"></div><div class="a" style="left:15px;top:42px;width:6px;height:6px;background:rgb(232,228,225)"></div><div class="a" style="left:15px;top:48px;width:6px;height:6px;background:rgb(208,208,211)"></div><div class="a" style="left:21px;top:42px;width:6px;height:6px;background:rgb(224,216,228)"></div><div class="a" style="left:21px;top:48px;width:6px;height:6px;background:rgb(180,187,198)"></div><div class="a" style="left:27px;top:42px;width:6px;height:6px;background:rgb(210,218,215)"></div><div class="a" style="left:27px;top:48px;width:6px;height:6px;background:rgb(205,209,206)"></div><div class="a" style="left:33px;top:42px;width:6px;height:6px;background:rgb(204,211,209)"></div><div class="a" style="left:33px;top:48px;width:6px;height:6px;background:rgb(183,190,188)"></div><div class="a" style="left:39px;top:42px;width:6px;height:6px;background:rgb(232,224,235)"></div><div class="a" style="left:39px;top:48px;width:6px;height:6px;background:rgb(177,180,186)"></div><div class="a" style="left:45px;top:42px;width:6px;height:6px;background:rgb(213,210,218)"></div><div class="a" style="left:45px;top:48px;width:6px;height:6px;background:rgb(205,201,206)"></div><div class="a" style="left:51px;top:42px;width:6px;height:6px;background:rgb(219,219,221)"></div><div class="a" style="left:51px;top:48px;width:6px;height:6px;background:rgb(186,181,180)"></div>
<div class="a" style="left:63px;top:42px;width:6px;height:6px;background:rgb(204,212,220)"></div><div class="a" style="left:63px;top:48px;width:6px;height:6px;background:rgb(204,210,211)"></div><div class="a" style="left:69px;top:42px;width:6px;height:6px;background:rgb(212,209,219)"></div><div class="a" style="left:69px;top:48px;width:6px;height:6px;background:rgb(202,198,195)"></div><div class="a" style="left:75px;top:42px;width:6px;height:6px;background:rgb(232,227,224)"></div><div class="a" style="left:75px;top:48px;width:6px;height:6px;background:rgb(190,183,189)"></div><div class="a" style="left:81px;top:42px;width:6px;height:6px;background:rgb(226,221,231)"></div><div class="a" style="left:81px;top:48px;width:6px;height:6px;background:rgb(160,161,163)"></div><div class="a" style="left:87px;top:42px;width:6px;height:6px;background:rgb(225,225,223)"></div><div class="a" style="left:87px;top:48px;width:6px;height:6px;background:rgb(216,211,214)"></div><div class="a" style="left:93px;top:42px;width:6px;height:6px;background:rgb(217,221,217)"></div><div class="a" style="left:93px;top:48px;width:6px;height:6px;background:rgb(183,180,184)"></div>
<div class="a" style="left:152px;top:42px;width:6px;height:6px;background:rgb(217,211,210)"></div><div class="a" style="left:152px;top:48px;width:6px;height:6px;background:rgb(220,212,220)"></div><div class="a" style="left:158px;top:42px;width:6px;height:6px;background:rgb(224,229,235)"></div><div class="a" style="left:158px;top:48px;width:6px;height:6px;background:rgb(191,196,192)"></div><div class="a" style="left:164px;top:42px;width:6px;height:6px;background:rgb(219,223,226)"></div><div class="a" style="left:164px;top:48px;width:6px;height:6px;background:rgb(213,209,206)"></div><div class="a" style="left:170px;top:42px;width:6px;height:6px;background:rgb(218,224,223)"></div><div class="a" style="left:170px;top:48px;width:6px;height:6px;background:rgb(206,202,203)"></div><div class="a" style="left:176px;top:42px;width:6px;height:6px;background:rgb(226,234,240)"></div><div class="a" style="left:176px;top:48px;width:6px;height:6px;background:rgb(208,213,209)"></div><div class="a" style="left:182px;top:42px;width:6px;height:6px;background:rgb(230,235,246)"></div><div class="a" style="left:182px;top:48px;width:6px;height:6px;background:rgb(214,213,218)"></div><div class="a" style="left:188px;top:42px;width:6px;height:6px;background:rgb(227,233,230)"></div><div class="a" style="left:188px;top:48px;width:6px;height:6px;background:rgb(217,209,221)"></div><div class="a" style="left:194px;top:42px;width:6px;height:6px;background:rgb(229,230,229)"></div><div class="a" style="left:194px;top:48px;width:6px;height:6px;background:rgb(190,195,192)"></div><div class="a" style="left:200px;top:42px;width:6px;height:6px;background:rgb(227,225,226)"></div><div class="a" style="left:200px;top:48px;width:6px;height:6px;background:rgb(206,212,215)"></div><div class="a" style="left:206px;top:42px;width:6px;height:6px;background:rgb(212,213,223)"></div><div class="a" style="left:206px;top:48px;width:6px;height:6px;background:rgb(203,199,203)"></div><div class="a" style="left:212px;top:42px;width:6px;height:6px;background:rgb(223,219,226)"></div><div class="a" style="left:212px;top:48px;width:6px;height:6px;background:rgb(200,195,193)"></div><div class="a" style="left:218px;top:42px;width:6px;height:6px;background:rgb(228,220,223)"></div><div class="a" style="left:218px;top:48px;width:6px;height:6px;background:rgb(183,186,195)"></div><div class="a" style="left:224px;top:42px;width:6px;height:6px;background:rgb(238,230,241)"></div><div class="a" style="left:224px;top:48px;width:6px;height:6px;background:rgb(173,169,169)"></div><div class="a" style="left:230px;top:42px;width:6px;height:6px;background:rgb(208,213,224)"></div><div class="a" style="left:230px;top:48px;width:6px;height:6px;background:rgb(214,207,219)"></div>
<div class="a" style="left:302px;top:42px;width:6px;height:6px;background:rgb(244,238,239)"></div><div class="a" style="left:302px;top:48px;width:6px;height:6px;background:rgb(168,168,170)"></div><div class="a" style="left:308px;top:42px;width:6px;height:6px;background:rgb(220,212,218)"></div><div class="a" style="left:308px;top:48px;width:6px;height:6px;background:rgb(175,174,183)"></div><div class="a" style="left:314px;top:42px;width:6px;height:6px;background:rgb(227,227,229)"></div><div class="a" style="left:314px;top:48px;width:6px;height:6px;background:rgb(171,179,183)"></div><div class="a" style="left:320px;top:42px;width:6px;height:6px;background:rgb(227,223,225)"></div><div class="a" style="left:320px;top:48px;width:6px;height:6px;background:rgb(174,171,174)"></div><div class="a" style="left:326px;top:42px;width:6px;height:6px;background:rgb(225,218,218)"></div><div class="a" style="left:326px;top:48px;width:6px;height:6px;background:rgb(193,186,188)"></div><div class="a" style="left:332px;top:42px;width:6px;height:6px;background:rgb(214,222,233)"></div><div class="a" style="left:332px;top:48px;width:6px;height:6px;background:rgb(200,206,214)"></div><div class="a" style="left:338px;top:42px;width:6px;height:6px;background:rgb(226,233,243)"></div><div class="a" style="left:338px;top:48px;width:6px;height:6px;background:rgb(173,174,172)"></div><div class="a" style="left:344px;top:42px;width:6px;height:6px;background:rgb(236,238,242)"></div><div class="a" style="left:344px;top:48px;width:6px;height:6px;background:rgb(173,175,179)"></div><div class="a" style="left:350px;top:42px;width:6px;height:6px;background:rgb(209,212,209)"></div><div class="a" style="left:350px;top:48px;width:6px;height:6px;background:rgb(173,176,173)"></div><div class="a" style="left:356px;top:42px;width:6px;height:6px;background:rgb(215,218,227)"></div><div class="a" style="left:356px;top:48px;width:6px;height:6px;background:rgb(159,165,164)"></div><div class="a" style="left:362px;top:42px;width:6px;height:6px;background:rgb(210,210,215)"></div><div class="a" style="left:362px;top:48px;width:6px;height:6px;background:rgb(165,162,172)"></div><div class="a" style="left:368px;top:42px;width:6px;height:6px;background:rgb(228,226,222)"></div><div class="a" style="left:368px;top:48px;width:6px;height:6px;background:rgb(163,161,167)"></div><div class="a" style="left:374px;top:42px;width:6px;height:6px;background:rgb(225,221,232)"></div><div class="a" style="left:374px;top:48px;width:6px;height:6px;background:rgb(162,164,175)"></div><div class="a" style="left:380px;top:42px;width:6px;height:6px;background:rgb(216,220,226)"></div><div class="a" style="left:380px;top:48px;width:6px;height:6px;background:rgb(167,167,165)"></div>
<div class="a" style="left:3px;top:75px;width:6px;height:6px;background:rgb(234,229,228)"></div><div class="a" style="left:3px;top:81px;width:6px;height:6px;background:rgb(196,188,192)"></div><div class="a" style="left:9px;top:75px;width:6px;height:6px;background:rgb(219,211,218)"></div><div class="a" style="left:9px;top:81px;width:6px;height:6px;background:rgb(206,203,213)"></div><div class="a" style="left:15px;top:75px;width:6px;height:6px;background:rgb(217,217,216)"></div><div class="a" style="left:15px;top:81px;width:6px;height:6px;background:rgb(210,208,220)"></div><div class="a" style="left:21px;top:75px;width:6px;height:6px;background:rgb(218,211,223)"></div><div class="a" style="left:21px;top:81px;width:6px;height:6px;background:rgb(175,182,187)"></div><div class="a" style="left:27px;top:75px;width:6px;height:6px;background:rgb(226,229,229)"></div><div class="a" style="left:27px;top:81px;width:6px;height:6px;background:rgb(174,171,181)"></div><div class="a" style="left:33px;top:75px;width:6px;height:6px;background:rgb(206,211,211)"></div><div class="a" style="left:33px;top:81px;width:6px;height:6px;background:rgb(186,181,186)"></div><div class="a" style="left:39px;top:75px;width:6px;height:6px;background:rgb(225,228,238)"></div><div class="a" style="left:39px;top:81px;width:6px;height:6px;background:rgb(191,190,191)"></div><div class="a" style="left:45px;top:75px;width:6px;height:6px;background:rgb(224,230,229)"></div><div class="a" style="left:45px;top:81px;width:6px;height:6px;background:rgb(202,205,213)"></div><div class="a" style="left:51px;top:75px;width:6px;height:6px;background:rgb(214,219,223)"></div><div class="a" style="left:51px;top:81px;width:6px;height:6px;background:rgb(181,177,174)"></div>
<div class="a" style="left:63px;top:75px;width:6px;height:6px;background:rgb(231,235,232)"></div><div class="a" style="left:63px;top:81px;width:6px;height:6px;background:rgb(198,190,194)"></div><div class="a" style="left:69px;top:75px;width:6px;height:6px;background:rgb(223,215,222)"></div><div class="a" style="left:69px;top:81px;width:6px;height:6px;background:rgb(185,181,191)"></div><div class="a" style="left:75px;top:75px;width:6px;height:6px;background:rgb(219,225,232)"></div><div class="a" style="left:75px;top:81px;width:6px;height:6px;background:rgb(186,191,191)"></div>
<div class="a" style="left:302px;top:75px;width:6px;height:6px;background:rgb(211,216,215)"></div><div class="a" style="left:302px;top:81px;width:6px;height:6px;background:rgb(191,196,197)"></div><div class="a" style="left:308px;top:75px;width:6px;height:6px;background:rgb(228,230,239)"></div><div class="a" style="left:308px;top:81px;width:6px;height:6px;background:rgb(206,202,202)"></div><div class="a" style="left:314px;top:75px;width:6px;height:6px;background:rgb(222,226,234)"></div><div class="a" style="left:314px;top:81px;width:6px;height:6px;background:rgb(209,211,223)"></div><div class="a" style="left:320px;top:75px;width:6px;height:6px;background:rgb(210,213,215)"></div><div class="a" style="left:320px;top:81px;width:6px;height:6px;background:rgb(215,215,222)"></div><div class="a" style="left:326px;top:75px;width:6px;height:6px;background:rgb(234,233,229)"></div><div class="a" style="left:326px;top:81px;width:6px;height:6px;background:rgb(219,213,222)"></div><div class="a" style="left:332px;top:75px;width:6px;height:6px;background:rgb(242,238,244)"></div><div class="a" style="left:332px;top:81px;width:6px;height:6px;background:rgb(196,195,206)"></div><div class="a" style="left:338px;top:75px;width:6px;height:6px;background:rgb(225,224,235)"></div><div class="a" style="left:338px;top:81px;width:6px;height:6px;background:rgb(159,161,157)"></div><div class="a" style="left:344px;top:75px;width:6px;height:6px;background:rgb(210,211,222)"></div><div class="a" style="left:344px;top:81px;width:6px;height:6px;background:rgb(179,171,181)"></div><div class="a" style="left:350px;top:75px;width:6px;height:6px;background:rgb(212,214,226)"></div><div class="a" style="left:350px;top:81px;width:6px;height:6px;background:rgb(166,173,185)"></div><div class="a" style="left:356px;top:75px;width:6px;height:6px;background:rgb(243,237,236)"></div><div class="a" style="left:356px;top:81px;width:6px;height:6px;background:rgb(197,196,196)"></div><div class="a" style="left:362px;top:75px;width:6px;height:6px;background:rgb(218,212,210)"></div><div class="a" style="left:362px;top:81px;width:6px;height:6px;background:rgb(192,199,195)"></div><div class="a" style="left:368px;top:75px;width:6px;height:6px;background:rgb(218,219,231)"></div><div class="a" style="left:368px;top:81px;width:6px;height:6px;background:rgb(171,164,160)"></div><div class="a" style="left:374px;top:75px;width:6px;height:6px;background:rgb(239,237,243)"></div><div class="a" style="left:374px;top:81px;width:6px;height:6px;background:rgb(184,181,181)"></div><div class="a" style="left:380px;top:75px;width:6px;height:6px;background:rgb(203,210,208)"></div><div class="a" style="left:380px;top:81px;width:6px;height:6px;background:rgb(209,207,209)"></div>
<div class="a" style="left:3px;top:108px;width:6px;height:6px;background:rgb(231,237,239)"></div><div class="a" style="left:3px;top:114px;width:6px;height:6px;background:rgb(186,187,198)"></div><div class="a" style="left:9px;top:108px;width:6px;height:6px;background:rgb(213,218,215)"></div><div class="a" style="left:9px;top:114px;width:6px;height:6px;background:rgb(180,186,188)"></div><div class="a" style="left:15px;top:108px;width:6px;height:6px;background:rgb(227,230,238)"></div><div class="a" style="left:15px;top:114px;width:6px;height:6px;background:rgb(198,191,189)"></div><div class="a" style="left:21px;top:108px;width:6px;height:6px;background:rgb(230,225,227)"></div><div class="a" style="left:21px;top:114px;width:6px;height:6px;background:rgb(208,201,206)"></div><div class="a" style="left:27px;top:108px;width:6px;height:6px;background:rgb(214,208,218)"></div><div class="a" style="left:27px;top:114px;width:6px;height:6px;background:rgb(212,208,218)"></div><div class="a" style="left:33px;top:108px;width:6px;height:6px;background:rgb(219,213,210)"></div><div class="a" style="left:33px;top:114px;width:6px;height:6px;background:rgb(206,206,213)"></div><div class="a" style="left:39px;top:108px;width:6px;height:6px;background:rgb(238,235,245)"></div><div class="a" style="left:39px;top:114px;width:6px;height:6px;background:rgb(196,193,201)"></div><div class="a" style="left:45px;top:108px;width:6px;height:6px;background:rgb(207,215,217)"></div><div class="a" style="left:45px;top:114px;width:6px;height:6px;background:rgb(179,176,176)"></div><div class="a" style="left:51px;top:108px;width:6px;height:6px;background:rgb(241,235,237)"></div><div class="a" style="left:51px;top:114px;width:6px;height:6px;background:rgb(168,170,166)"></div><div class="a" style="left:57px;top:108px;width:6px;height:6px;background:rgb(217,213,225)"></div><div class="a" style="left:57px;top:114px;width:6px;height:6px;background:rgb(162,170,170)"></div><div class="a" style="left:63px;top:108px;width:6px;height:6px;background:rgb(208,211,221)"></div><div class="a" style="left:63px;top:114px;width:6px;height:6px;background:rgb(188,191,188)"></div><div class="a" style="left:69px;top:108px;width:6px;height:6px;background:rgb(226,234,242)"></div><div class="a" style="left:69px;top:114px;width:6px;height:6px;background:rgb(190,188,197)"></div><div class="a" style="left:75px;top:108px;width:6px;height:6px;background:rgb(202,209,212)"></div><div class="a" style="left:75px;top:114px;width:6px;height:6px;background:rgb(178,185,193)"></div><div class="a" style="left:81px;top:108px;width:6px;height:6px;background:rgb(215,223,226)"></div><div class="a" style="left:81px;top:114px;width:6px;height:6px;background:rgb(170,175,183)"></div><div class="a" style="left:87px;top:108px;width:6px;height:6px;background:rgb(221,223,224)"></div><div class="a" style="left:87px;top:114px;width:6px;height:6px;background:rgb(176,181,188)"></div><div class="a" style="left:93px;top:108px;width:6px;height:6px;background:rgb(232,237,234)"></div><div class="a" style="left:93px;top:114px;width:6px;height:6px;background:rgb(212,211,215)"></div><div class="a" style="left:99px;top:108px;width:6px;height:6px;background:rgb(239,233,238)"></div><div class="a" style="left:99px;top:114px;width:6px;height:6px;background:rgb(190,191,195)"></div><div class="a" style="left:105px;top:108px;width:6px;height:6px;background:rgb(210,208,215)"></div><div class="a" style="left:105px;top:114px;width:6px;height:6px;background:rgb(174,180,177)"></div><div class="a" style="left:111px;top:108px;width:6px;height:6px;background:rgb(234,229,227)"></div><div class="a" style="left:111px;top:114px;width:6px;height:6px;background:rgb(189,197,196)"></div>
<div class="a" style="left:152px;top:108px;width:6px;height:6px;background:rgb(202,208,204)"></div><div class="a" style="left:152px;top:114px;width:6px;height:6px;background:rgb(178,170,167)"></div><div class="a" style="left:158px;top:108px;width:6px;height:6px;background:rgb(216,223,225)"></div><div class="a" style="left:158px;top:114px;width:6px;height:6px;background:rgb(209,201,207)"></div><div class="a" style="left:164px;top:108px;width:6px;height:6px;background:rgb(221,214,220)"></div><div class="a" style="left:164px;top:114px;width:6px;height:6px;background:rgb(218,211,218)"></div><div class="a" style="left:170px;top:108px;width:6px;height:6px;background:rgb(231,238,246)"></div><div class="a" style="left:170px;top:114px;width:6px;height:6px;background:rgb(183,179,177)"></div><div class="a" style="left:176px;top:108px;width:6px;height:6px;background:rgb(239,238,239)"></div><div class="a" style="left:176px;top:114px;width:6px;height:6px;background:rgb(219,214,213)"></div><div class="a" style="left:182px;top:108px;width:6px;height:6px;background:rgb(228,224,230)"></div><div class="a" style="left:182px;top:114px;width:6px;height:6px;background:rgb(198,194,195)"></div><div class="a" style="left:188px;top:108px;width:6px;height:6px;background:rgb(238,234,241)"></div><div class="a" style="left:188px;top:114px;width:6px;height:6px;background:rgb(174,171,180)"></div><div class="a" style="left:194px;top:108px;width:6px;height:6px;background:rgb(221,222,232)"></div><div class="a" style="left:194px;top:114px;width:6px;height:6px;background:rgb(216,209,216)"></div><div class="a" style="left:200px;top:108px;width:6px;height:6px;background:rgb(213,216,228)"></div><div class="a" style="left:200px;top:114px;width:6px;height:6px;background:rgb(210,206,217)"></div><div class="a" style="left:206px;top:108px;width:6px;height:6px;background:rgb(205,209,210)"></div><div class="a" style="left:206px;top:114px;width:6px;height:6px;background:rgb(197,205,215)"></div><div class="a" style="left:212px;top:108px;width:6px;height:6px;background:rgb(205,210,216)"></div><div class="a" style="left:212px;top:114px;width:6px;height:6px;background:rgb(168,175,172)"></div><div class="a" style="left:218px;top:108px;width:6px;height:6px;background:rgb(228,222,228)"></div><div class="a" style="left:218px;top:114px;width:6px;height:6px;background:rgb(175,183,181)"></div><div class="a" style="left:224px;top:108px;width:6px;height:6px;background:rgb(218,214,213)"></div><div class="a" style="left:224px;top:114px;width:6px;height:6px;background:rgb(182,181,180)"></div><div class="a" style="left:230px;top:108px;width:6px;height:6px;background:rgb(216,222,224)"></div><div class="a" style="left:230px;top:114px;width:6px;height:6px;background:rgb(168,175,175)"></div>
<div class="a" style="left:302px;top:108px;width:6px;height:6px;background:rgb(233,237,233)"></div><div class="a" style="left:302px;top:114px;width:6px;height:6px;background:rgb(166,167,172)"></div><div class="a" style="left:308px;top:108px;width:6px;height:6px;background:rgb(236,238,241)"></div><div class="a" style="left:308px;top:114px;width:6px;height:6px;background:rgb(222,214,223)"></div><div class="a" style="left:314px;top:108px;width:6px;height:6px;background:rgb(226,224,226)"></div><div class="a" style="left:314px;top:114px;width:6px;height:6px;background:rgb(186,189,187)"></div><div class="a" style="left:320px;top:108px;width:6px;height:6px;background:rgb(204,209,205)"></div><div class="a" style="left:320px;top:114px;width:6px;height:6px;background:rgb(209,214,216)"></div><div class="a" style="left:326px;top:108px;width:6px;height:6px;background:rgb(238,238,236)"></div><div class="a" style="left:326px;top:114px;width:6px;height:6px;background:rgb(172,166,174)"></div><div class="a" style="left:332px;top:108px;width:6px;height:6px;background:rgb(210,215,226)"></div><div class="a" style="left:332px;top:114px;width:6px;height:6px;background:rgb(211,208,216)"></div><div class="a" style="left:338px;top:108px;width:6px;height:6px;background:rgb(233,227,226)"></div><div class="a" style="left:338px;top:114px;width:6px;height:6px;background:rgb(184,178,186)"></div><div class="a" style="left:344px;top:108px;width:6px;height:6px;background:rgb(209,214,210)"></div><div class="a" style="left:344px;top:114px;width:6px;height:6px;background:rgb(190,189,187)"></div><div class="a" style="left:350px;top:108px;width:6px;height:6px;background:rgb(221,218,220)"></div><div class="a" style="left:350px;top:114px;width:6px;height:6px;background:rgb(185,191,198)"></div><div class="a" style="left:356px;top:108px;width:6px;height:6px;background:rgb(215,221,233)"></div><div class="a" style="left:356px;top:114px;width:6px;height:6px;background:rgb(172,173,180)"></div><div class="a" style="left:362px;top:108px;width:6px;height:6px;background:rgb(227,234,240)"></div><div class="a" style="left:362px;top:114px;width:6px;height:6px;background:rgb(180,175,185)"></div><div class="a" style="left:368px;top:108px;width:6px;height:6px;background:rgb(210,210,212)"></div><div class="a" style="left:368px;top:114px;width:6px;height:6px;background:rgb(177,180,182)"></div><div class="a" style="left:374px;top:108px;width:6px;height:6px;background:rgb(229,231,241)"></div><div class="a" style="left:374px;top:114px;width:6px;height:6px;background:rgb(210,205,212)"></div><div class="a" style="left:380px;top:108px;width:6px;height:6px;background:rgb(236,238,247)"></div><div class="a" style="left:380px;top:114px;width:6px;height:6px;background:rgb(195,190,201)"></div>
<div class="a" style="left:3px;top:141px;width:6px;height:6px;background:rgb(219,226,231)"></div><div class="a" style="left:3px;top:147px;width:6px;height:6px;background:rgb(158,161,160)"></div><div class="a" style="left:9px;top:141px;width:6px;height:6px;background:rgb(204,208,213)"></div><div class="a" style="left:9px;top:147px;width:6px;height:6px;background:rgb(200,192,189)"></div><div class="a" style="left:15px;top:141px;width:6px;height:6px;background:rgb(235,228,225)"></div><div class="a" style="left:15px;top:147px;width:6px;height:6px;background:rgb(170,172,176)"></div><div class="a" style="left:21px;top:141px;width:6px;height:6px;background:rgb(228,223,220)"></div><div class="a" style="left:21px;top:147px;width:6px;height:6px;background:rgb(188,182,184)"></div><div class="a" style="left:27px;top:141px;width:6px;height:6px;background:rgb(232,231,231)"></div><div class="a" style="left:27px;top:147px;width:6px;height:6px;background:rgb(172,166,171)"></div><div class="a" style="left:33px;top:141px;width:6px;height:6px;background:rgb(242,237,247)"></div><div class="a" style="left:33px;top:147px;width:6px;height:6px;background:rgb(162,164,164)"></div><div class="a" style="left:39px;top:141px;width:6px;height:6px;background:rgb(224,223,231)"></div><div class="a" style="left:39px;top:147px;width:6px;height:6px;background:rgb(214,211,212)"></div><div class="a" style="left:45px;top:141px;width:6px;height:6px;background:rgb(222,221,231)"></div><div class="a" style="left:45px;top:147px;width:6px;height:6px;background:rgb(198,190,193)"></div><div class="a" style="left:51px;top:141px;width:6px;height:6px;background:rgb(220,219,224)"></div><div class="a" style="left:51px;top:147px;width:6px;height:6px;background:rgb(167,161,168)"></div>
<div class="a" style="left:63px;top:141px;width:6px;height:6px;background:rgb(239,236,241)"></div><div class="a" style="left:63px;top:147px;width:6px;height:6px;background:rgb(206,207,219)"></div><div class="a" style="left:69px;top:141px;width:6px;height:6px;background:rgb(200,208,208)"></div><div class="a" style="left:69px;top:147px;width:6px;height:6px;background:rgb(208,200,200)"></div><div class="a" style="left:75px;top:141px;width:6px;height:6px;background:rgb(217,225,226)"></div><div class="a" style="left:75px;top:147px;width:6px;height:6px;background:rgb(155,163,165)"></div><div class="a" style="left:81px;top:141px;width:6px;height:6px;background:rgb(238,232,239)"></div><div class="a" style="left:81px;top:147px;width:6px;height:6px;background:rgb(213,210,207)"></div><div class="a" style="left:87px;top:141px;width:6px;height:6px;background:rgb(220,223,226)"></div><div class="a" style="left:87px;top:147px;width:6px;height:6px;background:rgb(160,160,169)"></div><div class="a" style="left:93px;top:141px;width:6px;height:6px;background:rgb(238,236,233)"></div><div class="a" style="left:93px;top:147px;width:6px;height:6px;background:rgb(193,198,208)"></div>
<div class="a" style="left:152px;top:141px;width:6px;height:6px;background:rgb(217,217,220)"></div><div class="a" style="left:152px;top:147px;width:6px;height:6px;background:rgb(210,203,212)"></div><div class="a" style="left:158px;top:141px;width:6px;height:6px;background:rgb(231,231,237)"></div><div class="a" style="left:158px;top:147px;width:6px;height:6px;background:rgb(154,162,171)"></div><div class="a" style="left:164px;top:141px;width:6px;height:6px;background:rgb(206,209,212)"></div><div class="a" style="left:164px;top:147px;width:6px;height:6px;background:rgb(173,168,180)"></div><div class="a" style="left:170px;top:141px;width:6px;height:6px;background:rgb(234,232,232)"></div><div class="a" style="left:170px;top:147px;width:6px;height:6px;background:rgb(169,177,178)"></div><div class="a" style="left:176px;top:141px;width:6px;height:6px;background:rgb(201,209,220)"></div><div class="a" style="left:176px;top:147px;width:6px;height:6px;background:rgb(194,201,211)"></div><div class="a" style="left:182px;top:141px;width:6px;height:6px;background:rgb(230,222,234)"></div><div class="a" style="left:182px;top:147px;width:6px;height:6px;background:rgb(189,186,198)"></div><div class="a" style="left:188px;top:141px;width:6px;height:6px;background:rgb(225,228,233)"></div><div class="a" style="left:188px;top:147px;width:6px;height:6px;background:rgb(165,171,171)"></div><div class="a" style="left:194px;top:141px;width:6px;height:6px;background:rgb(229,234,243)"></div><div class="a" style="left:194px;top:147px;width:6px;height:6px;background:rgb(212,209,219)"></div><div class="a" style="left:200px;top:141px;width:6px;height:6px;background:rgb(222,222,226)"></div><div class="a" style="left:200px;top:147px;width:6px;height:6px;background:rgb(189,188,200)"></div><div class="a" style="left:206px;top:141px;width:6px;height:6px;background:rgb(214,212,212)"></div><div class="a" style="left:206px;top:147px;width:6px;height:6px;background:rgb(186,193,202)"></div><div class="a" style="left:212px;top:141px;width:6px;height:6px;background:rgb(222,223,233)"></div><div class="a" style="left:212px;top:147px;width:6px;height:6px;background:rgb(197,197,193)"></div><div class="a" style="left:218px;top:141px;width:6px;height:6px;background:rgb(213,218,229)"></div><div class="a" style="left:218px;top:147px;width:6px;height:6px;background:rgb(168,168,172)"></div><div class="a" style="left:224px;top:141px;width:6px;height:6px;background:rgb(216,211,209)"></div><div class="a" style="left:224px;top:147px;width:6px;height:6px;background:rgb(176,183,195)"></div><div class="a" style="left:230px;top:141px;width:6px;height:6px;background:rgb(229,223,225)"></div><div class="a" style="left:230px;top:147px;width:6px;height:6px;background:rgb(182,179,180)"></div>
<div class="a" style="left:302px;top:141px;width:6px;height:6px;background:rgb(232,228,236)"></div><div class="a" style="left:302px;top:147px;width:6px;height:6px;background:rgb(173,180,184)"></div><div class="a" style="left:308px;top:141px;width:6px;height:6px;background:rgb(207,214,220)"></div><div class="a" style="left:308px;top:147px;width:6px;height:6px;background:rgb(184,180,185)"></div><div class="a" style="left:314px;top:141px;width:6px;height:6px;background:rgb(205,209,218)"></div><div class="a" style="left:314px;top:147px;width:6px;height:6px;background:rgb(181,176,174)"></div><div class="a" style="left:320px;top:141px;width:6px;height:6px;background:rgb(222,223,225)"></div><div class="a" style="left:320px;top:147px;width:6px;height:6px;background:rgb(201,207,219)"></div><div class="a" style="left:326px;top:141px;width:6px;height:6px;background:rgb(206,211,207)"></div><div class="a" style="left:326px;top:147px;width:6px;height:6px;background:rgb(172,178,187)"></div><div class="a" style="left:332px;top:141px;width:6px;height:6px;background:rgb(223,216,226)"></div><div class="a" style="left:332px;top:147px;width:6px;height:6px;background:rgb(178,177,174)"></div><div class="a" style="left:338px;top:141px;width:6px;height:6px;background:rgb(212,213,224)"></div><div class="a" style="left:338px;top:147px;width:6px;height:6px;background:rgb(166,170,170)"></div><div class="a" style="left:344px;top:141px;width:6px;height:6px;background:rgb(233,236,246)"></div><div class="a" style="left:344px;top:147px;width:6px;height:6px;background:rgb(207,203,199)"></div><div class="a" style="left:350px;top:141px;width:6px;height:6px;background:rgb(216,212,209)"></div><div class="a" style="left:350px;top:147px;width:6px;height:6px;background:rgb(168,171,176)"></div><div class="a" style="left:356px;top:141px;width:6px;height:6px;background:rgb(210,214,214)"></div><div class="a" style="left:356px;top:147px;width:6px;height:6px;background:rgb(171,163,163)"></div><div class="a" style="left:362px;top:141px;width:6px;height:6px;background:rgb(223,225,233)"></div><div class="a" style="left:362px;top:147px;width:6px;height:6px;background:rgb(204,209,218)"></div><div class="a" style="left:368px;top:141px;width:6px;height:6px;background:rgb(217,220,216)"></div><div class="a" style="left:368px;top:147px;width:6px;height:6px;background:rgb(172,177,177)"></div><div class="a" style="left:374px;top:141px;width:6px;height:6px;background:rgb(207,211,216)"></div><div class="a" style="left:374px;top:147px;width:6px;height:6px;background:rgb(172,168,175)"></div><div class="a" style="left:380px;top:141px;width:6px;height:6px;background:rgb(232,238,240)"></div><div class="a" style="left:380px;top:147px;width:6px;height:6px;background:rgb(163,160,160)"></div>
<div class="a" style="left:3px;top:174px;width:6px;height:6px;background:rgb(222,223,221)"></div><div class="a" style="left:3px;top:180px;width:6px;height:6px;background:rgb(189,182,181)"></div><div class="a" style="left:9px;top:174px;width:6px;height:6px;background:rgb(232,230,241)"></div><div class="a" style="left:9px;top:180px;width:6px;height:6px;background:rgb(164,161,173)"></div><div class="a" style="left:15px;top:174px;width:6px;height:6px;background:rgb(237,231,240)"></div><div class="a" style="left:15px;top:180px;width:6px;height:6px;background:rgb(190,189,199)"></div><div class="a" style="left:21px;top:174px;width:6px;height:6px;background:rgb(218,212,220)"></div><div class="a" style="left:21px;top:180px;width:6px;height:6px;background:rgb(173,172,173)"></div><div class="a" style="left:27px;top:174px;width:6px;height:6px;background:rgb(214,217,223)"></div><div class="a" style="left:27px;top:180px;width:6px;height:6px;background:rgb(175,177,177)"></div><div class="a" style="left:33px;top:174px;width:6px;height:6px;background:rgb(202,209,218)"></div><div class="a" style="left:33px;top:180px;width:6px;height:6px;background:rgb(196,199,198)"></div><div class="a" style="left:39px;top:174px;width:6px;height:6px;background:rgb(218,226,227)"></div><div class="a" style="left:39px;top:180px;width:6px;height:6px;background:rgb(210,215,223)"></div><div class="a" style="left:45px;top:174px;width:6px;height:6px;background:rgb(229,226,238)"></div><div class="a" style="left:45px;top:180px;width:6px;height:6px;background:rgb(204,204,202)"></div><div class="a" style="left:51px;top:174px;width:6px;height:6px;background:rgb(228,222,228)"></div><div class="a" style="left:51px;top:180px;width:6px;height:6px;background:rgb(167,169,175)"></div><div class="a" style="left:57px;top:174px;width:6px;height:6px;background:rgb(230,222,229)"></div><div class="a" style="left:57px;top:180px;width:6px;height:6px;background:rgb(202,200,207)"></div><div class="a" style="left:63px;top:174px;width:6px;height:6px;background:rgb(233,230,236)"></div><div class="a" style="left:63px;top:180px;width:6px;height:6px;background:rgb(179,178,182)"></div><div class="a" style="left:69px;top:174px;width:6px;height:6px;background:rgb(208,213,225)"></div><div class="a" style="left:69px;top:180px;width:6px;height:6px;background:rgb(176,174,177)"></div><div class="a" style="left:75px;top:174px;width:6px;height:6px;background:rgb(222,217,221)"></div><div class="a" style="left:75px;top:180px;width:6px;height:6px;background:rgb(184,188,199)"></div><div class="a" style="left:81px;top:174px;width:6px;height:6px;background:rgb(215,218,230)"></div><div class="a" style="left:81px;top:180px;width:6px;height:6px;background:rgb(199,193,190)"></div><div class="a" style="left:87px;top:174px;width:6px;height:6px;background:rgb(215,210,219)"></div><div class="a" style="left:87px;top:180px;width:6px;height:6px;background:rgb(196,195,192)"></div><div class="a" style="left:93px;top:174px;width:6px;height:6px;background:rgb(219,215,223)"></div><div class="a" style="left:93px;top:180px;width:6px;height:6px;background:rgb(167,173,180)"></div><div class="a" style="left:99px;top:174px;width:6px;height:6px;background:rgb(222,224,221)"></div><div class="a" style="left:99px;top:180px;width:6px;height:6px;background:rgb(202,195,194)"></div><div class="a" style="left:105px;top:174px;width:6px;height:6px;background:rgb(225,221,228)"></div><div class="a" style="left:105px;top:180px;width:6px;height:6px;background:rgb(161,160,167)"></div><div class="a" style="left:111px;top:174px;width:6px;height:6px;background:rgb(227,224,232)"></div><div class="a" style="left:111px;top:180px;width:6px;height:6px;background:rgb(191,188,187)"></div>
<div class="a" style="left:152px;top:174px;width:6px;height:6px;background:rgb(233,226,226)"></div><div class="a" style="left:152px;top:180px;width:6px;height:6px;background:rgb(179,180,176)"></div><div class="a" style="left:158px;top:174px;width:6px;height:6px;background:rgb(213,219,215)"></div><div class="a" style="left:158px;top:180px;width:6px;height:6px;background:rgb(162,168,170)"></div><div class="a" style="left:164px;top:174px;width:6px;height:6px;background:rgb(223,218,223)"></div><div class="a" style="left:164px;top:180px;width:6px;height:6px;background:rgb(164,172,168)"></div><div class="a" style="left:170px;top:174px;width:6px;height:6px;background:rgb(227,225,235)"></div><div class="a" style="left:170px;top:180px;width:6px;height:6px;background:rgb(210,207,209)"></div><div class="a" style="left:176px;top:174px;width:6px;height:6px;background:rgb(224,222,221)"></div><div class="a" style="left:176px;top:180px;width:6px;height:6px;background:rgb(196,192,195)"></div><div class="a" style="left:182px;top:174px;width:6px;height:6px;background:rgb(219,223,228)"></div><div class="a" style="left:182px;top:180px;width:6px;height:6px;background:rgb(176,178,177)"></div><div class="a" style="left:188px;top:174px;width:6px;height:6px;background:rgb(231,234,232)"></div><div class="a" style="left:188px;top:180px;width:6px;height:6px;background:rgb(179,187,194)"></div><div class="a" style="left:194px;top:174px;width:6px;height:6px;background:rgb(212,220,231)"></div><div class="a" style="left:194px;top:180px;width:6px;height:6px;background:rgb(210,213,224)"></div><div class="a" style="left:200px;top:174px;width:6px;height:6px;background:rgb(212,216,224)"></div><div class="a" style="left:200px;top:180px;width:6px;height:6px;background:rgb(181,173,182)"></div><div class="a" style="left:206px;top:174px;width:6px;height:6px;background:rgb(227,226,235)"></div><div class="a" style="left:206px;top:180px;width:6px;height:6px;background:rgb(173,178,176)"></div><div class="a" style="left:212px;top:174px;width:6px;height:6px;background:rgb(216,210,216)"></div><div class="a" style="left:212px;top:180px;width:6px;height:6px;background:rgb(156,164,170)"></div><div class="a" style="left:218px;top:174px;width:6px;height:6px;background:rgb(228,223,222)"></div><div class="a" style="left:218px;top:180px;width:6px;height:6px;background:rgb(214,212,221)"></div><div class="a" style="left:224px;top:174px;width:6px;height:6px;background:rgb(235,236,242)"></div><div class="a" style="left:224px;top:180px;width:6px;height:6px;background:rgb(176,172,170)"></div><div class="a" style="left:230px;top:174px;width:6px;height:6px;background:rgb(217,209,205)"></div><div class="a" style="left:230px;top:180px;width:6px;height:6px;background:rgb(200,192,195)"></div>
<div class="a" style="left:302px;top:174px;width:6px;height:6px;background:rgb(220,226,227)"></div><div class="a" style="left:302px;top:180px;width:6px;height:6px;background:rgb(181,174,182)"></div><div class="a" style="left:308px;top:174px;width:6px;height:6px;background:rgb(220,217,227)"></div><div class="a" style="left:308px;top:180px;width:6px;height:6px;background:rgb(210,202,205)"></div><div class="a" style="left:314px;top:174px;width:6px;height:6px;background:rgb(215,214,220)"></div><div class="a" style="left:314px;top:180px;width:6px;height:6px;background:rgb(193,197,204)"></div><div class="a" style="left:320px;top:174px;width:6px;height:6px;background:rgb(235,227,234)"></div><div class="a" style="left:320px;top:180px;width:6px;height:6px;background:rgb(188,180,182)"></div><div class="a" style="left:326px;top:174px;width:6px;height:6px;background:rgb(215,222,231)"></div><div class="a" style="left:326px;top:180px;width:6px;height:6px;background:rgb(215,214,216)"></div><div class="a" style="left:332px;top:174px;width:6px;height:6px;background:rgb(221,223,224)"></div><div class="a" style="left:332px;top:180px;width:6px;height:6px;background:rgb(207,212,222)"></div><div class="a" style="left:338px;top:174px;width:6px;height:6px;background:rgb(219,211,219)"></div><div class="a" style="left:338px;top:180px;width:6px;height:6px;background:rgb(211,213,219)"></div><div class="a" style="left:344px;top:174px;width:6px;height:6px;background:rgb(206,213,219)"></div><div class="a" style="left:344px;top:180px;width:6px;height:6px;background:rgb(190,191,199)"></div><div class="a" style="left:350px;top:174px;width:6px;height:6px;background:rgb(229,236,239)"></div><div class="a" style="left:350px;top:180px;width:6px;height:6px;background:rgb(188,185,193)"></div><div class="a" style="left:356px;top:174px;width:6px;height:6px;background:rgb(212,215,220)"></div><div class="a" style="left:356px;top:180px;width:6px;height:6px;background:rgb(179,176,180)"></div><div class="a" style="left:362px;top:174px;width:6px;height:6px;background:rgb(211,209,208)"></div><div class="a" style="left:362px;top:180px;width:6px;height:6px;background:rgb(172,173,178)"></div><div class="a" style="left:368px;top:174px;width:6px;height:6px;background:rgb(219,222,223)"></div><div class="a" style="left:368px;top:180px;width:6px;height:6px;background:rgb(182,175,177)"></div><div class="a" style="left:374px;top:174px;width:6px;height:6px;background:rgb(217,214,217)"></div><div class="a" style="left:374px;top:180px;width:6px;height:6px;background:rgb(179,171,179)"></div><div class="a" style="left:380px;top:174px;width:6px;height:6px;background:rgb(232,227,228)"></div><div class="a" style="left:380px;top:180px;width:6px;height:6px;background:rgb(201,200,210)"></div>
<div class="a" style="left:3px;top:207px;width:6px;height:6px;background:rgb(212,219,217)"></div><div class="a" style="left:3px;top:213px;width:6px;height:6px;background:rgb(216,210,221)"></div><div class="a" style="left:9px;top:207px;width:6px;height:6px;background:rgb(205,208,212)"></div><div class="a" style="left:9px;top:213px;width:6px;height:6px;background:rgb(198,193,204)"></div><div class="a" style="left:15px;top:207px;width:6px;height:6px;background:rgb(219,215,227)"></div><div class="a" style="left:15px;top:213px;width:6px;height:6px;background:rgb(194,191,199)"></div><div class="a" style="left:21px;top:207px;width:6px;height:6px;background:rgb(234,227,228)"></div><div class="a" style="left:21px;top:213px;width:6px;height:6px;background:rgb(172,167,173)"></div><div class="a" style="left:27px;top:207px;width:6px;height:6px;background:rgb(231,235,241)"></div><div class="a" style="left:27px;top:213px;width:6px;height:6px;background:rgb(169,166,178)"></div><div class="a" style="left:33px;top:207px;width:6px;height:6px;background:rgb(213,212,223)"></div><div class="a" style="left:33px;top:213px;width:6px;height:6px;background:rgb(196,200,210)"></div><div class="a" style="left:39px;top:207px;width:6px;height:6px;background:rgb(226,219,216)"></div><div class="a" style="left:39px;top:213px;width:6px;height:6px;background:rgb(200,197,199)"></div><div class="a" style="left:45px;top:207px;width:6px;height:6px;background:rgb(221,227,232)"></div><div class="a" style="left:45px;top:213px;width:6px;height:6px;background:rgb(198,197,203)"></div><div class="a" style="left:51px;top:207px;width:6px;height:6px;background:rgb(222,221,217)"></div><div class="a" style="left:51px;top:213px;width:6px;height:6px;background:rgb(190,187,196)"></div>
<div class="a" style="left:63px;top:207px;width:6px;height:6px;background:rgb(226,223,224)"></div><div class="a" style="left:63px;top:213px;width:6px;height:6px;background:rgb(176,175,177)"></div><div class="a" style="left:69px;top:207px;width:6px;height:6px;background:rgb(230,226,225)"></div><div class="a" style="left:69px;top:213px;width:6px;height:6px;background:rgb(177,180,186)"></div><div class="a" style="left:75px;top:207px;width:6px;height:6px;background:rgb(244,237,238)"></div><div class="a" style="left:75px;top:213px;width:6px;height:6px;background:rgb(198,194,204)"></div><div class="a" style="left:81px;top:207px;width:6px;height:6px;background:rgb(219,214,221)"></div><div class="a" style="left:81px;top:213px;width:6px;height:6px;background:rgb(159,166,177)"></div><div class="a" style="left:87px;top:207px;width:6px;height:6px;background:rgb(228,230,231)"></div><div class="a" style="left:87px;top:213px;width:6px;height:6px;background:rgb(189,192,191)"></div><div class="a" style="left:93px;top:207px;width:6px;height:6px;background:rgb(206,211,219)"></div><div class="a" style="left:93px;top:213px;width:6px;height:6px;background:rgb(223,215,221)"></div>
<div class="a" style="left:152px;top:207px;width:6px;height:6px;background:rgb(220,220,218)"></div><div class="a" style="left:152px;top:213px;width:6px;height:6px;background:rgb(190,190,196)"></div><div class="a" style="left:158px;top:207px;width:6px;height:6px;background:rgb(215,215,214)"></div><div class="a" style="left:158px;top:213px;width:6px;height:6px;background:rgb(168,173,184)"></div><div class="a" style="left:164px;top:207px;width:6px;height:6px;background:rgb(224,219,219)"></div><div class="a" style="left:164px;top:213px;width:6px;height:6px;background:rgb(179,176,177)"></div><div class="a" style="left:170px;top:207px;width:6px;height:6px;background:rgb(224,216,218)"></div><div class="a" style="left:170px;top:213px;width:6px;height:6px;background:rgb(201,202,205)"></div><div class="a" style="left:176px;top:207px;width:6px;height:6px;background:rgb(219,216,222)"></div><div class="a" style="left:176px;top:213px;width:6px;height:6px;background:rgb(161,166,166)"></div><div class="a" style="left:182px;top:207px;width:6px;height:6px;background:rgb(226,232,235)"></div><div class="a" style="left:182px;top:213px;width:6px;height:6px;background:rgb(191,189,188)"></div><div class="a" style="left:188px;top:207px;width:6px;height:6px;background:rgb(214,218,219)"></div><div class="a" style="left:188px;top:213px;width:6px;height:6px;background:rgb(169,162,166)"></div><div class="a" style="left:194px;top:207px;width:6px;height:6px;background:rgb(220,224,231)"></div><div class="a" style="left:194px;top:213px;width:6px;height:6px;background:rgb(221,215,224)"></div><div class="a" style="left:200px;top:207px;width:6px;height:6px;background:rgb(229,224,233)"></div><div class="a" style="left:200px;top:213px;width:6px;height:6px;background:rgb(177,176,180)"></div><div class="a" style="left:206px;top:207px;width:6px;height:6px;background:rgb(230,226,226)"></div><div class="a" style="left:206px;top:213px;width:6px;height:6px;background:rgb(155,162,163)"></div><div class="a" style="left:212px;top:207px;width:6px;height:6px;background:rgb(213,221,223)"></div><div class="a" style="left:212px;top:213px;width:6px;height:6px;background:rgb(206,210,222)"></div><div class="a" style="left:218px;top:207px;width:6px;height:6px;background:rgb(229,231,238)"></div><div class="a" style="left:218px;top:213px;width:6px;height:6px;background:rgb(169,176,183)"></div><div class="a" style="left:224px;top:207px;width:6px;height:6px;background:rgb(209,214,215)"></div><div class="a" style="left:224px;top:213px;width:6px;height:6px;background:rgb(167,173,184)"></div><div class="a" style="left:230px;top:207px;width:6px;height:6px;background:rgb(222,221,221)"></div><div class="a" style="left:230px;top:213px;width:6px;height:6px;background:rgb(169,167,168)"></div>
<div class="a" style="left:302px;top:207px;width:6px;height:6px;background:rgb(212,216,214)"></div><div class="a" style="left:302px;top:213px;width:6px;height:6px;background:rgb(193,199,199)"></div><div class="a" style="left:308px;top:207px;width:6px;height:6px;background:rgb(203,211,209)"></div><div class="a" style="left:308px;top:213px;width:6px;height:6px;background:rgb(208,200,208)"></div><div class="a" style="left:314px;top:207px;width:6px;height:6px;background:rgb(236,230,240)"></div><div class="a" style="left:314px;top:213px;width:6px;height:6px;background:rgb(173,176,172)"></div><div class="a" style="left:320px;top:207px;width:6px;height:6px;background:rgb(211,210,219)"></div><div class="a" style="left:320px;top:213px;width:6px;height:6px;background:rgb(162,170,167)"></div><div class="a" style="left:326px;top:207px;width:6px;height:6px;background:rgb(226,218,224)"></div><div class="a" style="left:326px;top:213px;width:6px;height:6px;background:rgb(216,213,212)"></div><div class="a" style="left:332px;top:207px;width:6px;height:6px;background:rgb(207,209,217)"></div><div class="a" style="left:332px;top:213px;width:6px;height:6px;background:rgb(166,160,166)"></div><div class="a" style="left:338px;top:207px;width:6px;height:6px;background:rgb(227,228,238)"></div><div class="a" style="left:338px;top:213px;width:6px;height:6px;background:rgb(187,188,184)"></div><div class="a" style="left:344px;top:207px;width:6px;height:6px;background:rgb(217,219,222)"></div><div class="a" style="left:344px;top:213px;width:6px;height:6px;background:rgb(175,170,178)"></div><div class="a" style="left:350px;top:207px;width:6px;height:6px;background:rgb(215,211,217)"></div><div class="a" style="left:350px;top:213px;width:6px;height:6px;background:rgb(191,196,199)"></div><div class="a" style="left:356px;top:207px;width:6px;height:6px;background:rgb(212,217,213)"></div><div class="a" style="left:356px;top:213px;width:6px;height:6px;background:rgb(177,185,191)"></div><div class="a" style="left:362px;top:207px;width:6px;height:6px;background:rgb(213,215,225)"></div><div class="a" style="left:362px;top:213px;width:6px;height:6px;background:rgb(204,196,200)"></div><div class="a" style="left:368px;top:207px;width:6px;height:6px;background:rgb(232,228,230)"></div><div class="a" style="left:368px;top:213px;width:6px;height:6px;background:rgb(198,193,198)"></div><div class="a" style="left:374px;top:207px;width:6px;height:6px;background:rgb(227,233,234)"></div><div class="a" style="left:374px;top:213px;width:6px;height:6px;background:rgb(216,210,222)"></div><div class="a" style="left:380px;top:207px;width:6px;height:6px;background:rgb(219,224,229)"></div><div class="a" style="left:380px;top:213px;width:6px;height:6px;background:rgb(193,197,207)"></div>
<div class="a" style="left:3px;top:240px;width:6px;height:6px;background:rgb(220,224,229)"></div><div class="a" style="left:3px;top:246px;width:6px;height:6px;background:rgb(190,193,196)"></div><div class="a" style="left:9px;top:240px;width:6px;height:6px;background:rgb(227,219,224)"></div><div class="a" style="left:9px;top:246px;width:6px;height:6px;background:rgb(161,167,178)"></div><div class="a" style="left:15px;top:240px;width:6px;height:6px;background:rgb(217,210,213)"></div><div class="a" style="left:15px;top:246px;width:6px;height:6px;background:rgb(212,207,203)"></div><div class="a" style="left:21px;top:240px;width:6px;height:6px;background:rgb(200,208,219)"></div><div class="a" style="left:21px;top:246px;width:6px;height:6px;background:rgb(191,199,196)"></div><div class="a" style="left:27px;top:240px;width:6px;height:6px;background:rgb(238,230,241)"></div><div class="a" style="left:27px;top:246px;width:6px;height:6px;background:rgb(153,160,167)"></div><div class="a" style="left:33px;top:240px;width:6px;height:6px;background:rgb(230,229,234)"></div><div class="a" style="left:33px;top:246px;width:6px;height:6px;background:rgb(219,212,223)"></div><div class="a" style="left:39px;top:240px;width:6px;height:6px;background:rgb(218,217,217)"></div><div class="a" style="left:39px;top:246px;width:6px;height:6px;background:rgb(173,179,187)"></div><div class="a" style="left:45px;top:240px;width:6px;height:6px;background:rgb(231,238,237)"></div><div class="a" style="left:45px;top:246px;width:6px;height:6px;background:rgb(201,203,206)"></div><div class="a" style="left:51px;top:240px;width:6px;height:6px;background:rgb(207,210,218)"></div><div class="a" style="left:51px;top:246px;width:6px;height:6px;background:rgb(201,193,193)"></div>
<div class="a" style="left:63px;top:240px;width:6px;height:6px;background:rgb(225,228,226)"></div><div class="a" style="left:63px;top:246px;width:6px;height:6px;background:rgb(204,203,215)"></div><div class="a" style="left:69px;top:240px;width:6px;height:6px;background:rgb(243,235,231)"></div><div class="a" style="left:69px;top:246px;width:6px;height:6px;background:rgb(185,191,198)"></div><div class="a" style="left:75px;top:240px;width:6px;height:6px;background:rgb(236,229,227)"></div><div class="a" style="left:75px;top:246px;width:6px;height:6px;background:rgb(188,186,194)"></div><div class="a" style="left:81px;top:240px;width:6px;height:6px;background:rgb(227,221,227)"></div><div class="a" style="left:81px;top:246px;width:6px;height:6px;background:rgb(190,198,204)"></div><div class="a" style="left:87px;top:240px;width:6px;height:6px;background:rgb(224,217,221)"></div><div class="a" style="left:87px;top:246px;width:6px;height:6px;background:rgb(217,210,214)"></div><div class="a" style="left:93px;top:240px;width:6px;height:6px;background:rgb(217,214,213)"></div><div class="a" style="left:93px;top:246px;width:6px;height:6px;background:rgb(201,201,212)"></div>
<div class="a" style="left:152px;top:240px;width:6px;height:6px;background:rgb(243,238,249)"></div><div class="a" style="left:152px;top:246px;width:6px;height:6px;background:rgb(206,208,214)"></div><div class="a" style="left:158px;top:240px;width:6px;height:6px;background:rgb(220,227,230)"></div><div class="a" style="left:158px;top:246px;width:6px;height:6px;background:rgb(190,197,205)"></div><div class="a" style="left:164px;top:240px;width:6px;height:6px;background:rgb(219,215,216)"></div><div class="a" style="left:164px;top:246px;width:6px;height:6px;background:rgb(175,180,181)"></div><div class="a" style="left:170px;top:240px;width:6px;height:6px;background:rgb(245,237,247)"></div><div class="a" style="left:170px;top:246px;width:6px;height:6px;background:rgb(181,176,185)"></div><div class="a" style="left:176px;top:240px;width:6px;height:6px;background:rgb(228,226,234)"></div><div class="a" style="left:176px;top:246px;width:6px;height:6px;background:rgb(180,187,194)"></div><div class="a" style="left:182px;top:240px;width:6px;height:6px;background:rgb(235,231,238)"></div><div class="a" style="left:182px;top:246px;width:6px;height:6px;background:rgb(210,206,210)"></div><div class="a" style="left:188px;top:240px;width:6px;height:6px;background:rgb(223,224,224)"></div><div class="a" style="left:188px;top:246px;width:6px;height:6px;background:rgb(172,174,170)"></div><div class="a" style="left:194px;top:240px;width:6px;height:6px;background:rgb(233,228,227)"></div><div class="a" style="left:194px;top:246px;width:6px;height:6px;background:rgb(202,198,209)"></div><div class="a" style="left:200px;top:240px;width:6px;height:6px;background:rgb(227,223,235)"></div><div class="a" style="left:200px;top:246px;width:6px;height:6px;background:rgb(197,192,194)"></div><div class="a" style="left:206px;top:240px;width:6px;height:6px;background:rgb(227,223,220)"></div><div class="a" style="left:206px;top:246px;width:6px;height:6px;background:rgb(198,201,197)"></div><div class="a" style="left:212px;top:240px;width:6px;height:6px;background:rgb(209,214,214)"></div><div class="a" style="left:212px;top:246px;width:6px;height:6px;background:rgb(193,185,184)"></div><div class="a" style="left:218px;top:240px;width:6px;height:6px;background:rgb(206,211,213)"></div><div class="a" style="left:218px;top:246px;width:6px;height:6px;background:rgb(174,178,187)"></div><div class="a" style="left:224px;top:240px;width:6px;height:6px;background:rgb(217,221,222)"></div><div class="a" style="left:224px;top:246px;width:6px;height:6px;background:rgb(178,173,184)"></div><div class="a" style="left:230px;top:240px;width:6px;height:6px;background:rgb(224,218,230)"></div><div class="a" style="left:230px;top:246px;width:6px;height:6px;background:rgb(161,161,157)"></div>
<div class="a" style="left:302px;top:240px;width:6px;height:6px;background:rgb(228,226,232)"></div><div class="a" style="left:302px;top:246px;width:6px;height:6px;background:rgb(199,195,197)"></div><div class="a" style="left:308px;top:240px;width:6px;height:6px;background:rgb(212,211,213)"></div><div class="a" style="left:308px;top:246px;width:6px;height:6px;background:rgb(163,165,173)"></div><div class="a" style="left:314px;top:240px;width:6px;height:6px;background:rgb(214,215,221)"></div><div class="a" style="left:314px;top:246px;width:6px;height:6px;background:rgb(168,174,180)"></div><div class="a" style="left:320px;top:240px;width:6px;height:6px;background:rgb(226,225,227)"></div><div class="a" style="left:320px;top:246px;width:6px;height:6px;background:rgb(211,213,221)"></div><div class="a" style="left:326px;top:240px;width:6px;height:6px;background:rgb(216,208,213)"></div><div class="a" style="left:326px;top:246px;width:6px;height:6px;background:rgb(211,212,212)"></div><div class="a" style="left:332px;top:240px;width:6px;height:6px;background:rgb(232,232,230)"></div><div class="a" style="left:332px;top:246px;width:6px;height:6px;background:rgb(210,210,217)"></div><div class="a" style="left:338px;top:240px;width:6px;height:6px;background:rgb(215,214,214)"></div><div class="a" style="left:338px;top:246px;width:6px;height:6px;background:rgb(180,182,184)"></div><div class="a" style="left:344px;top:240px;width:6px;height:6px;background:rgb(232,237,247)"></div><div class="a" style="left:344px;top:246px;width:6px;height:6px;background:rgb(187,187,184)"></div><div class="a" style="left:350px;top:240px;width:6px;height:6px;background:rgb(229,225,229)"></div><div class="a" style="left:350px;top:246px;width:6px;height:6px;background:rgb(198,197,209)"></div><div class="a" style="left:356px;top:240px;width:6px;height:6px;background:rgb(220,214,216)"></div><div class="a" style="left:356px;top:246px;width:6px;height:6px;background:rgb(182,179,177)"></div><div class="a" style="left:362px;top:240px;width:6px;height:6px;background:rgb(216,211,219)"></div><div class="a" style="left:362px;top:246px;width:6px;height:6px;background:rgb(208,205,208)"></div><div class="a" style="left:368px;top:240px;width:6px;height:6px;background:rgb(211,216,215)"></div><div class="a" style="left:368px;top:246px;width:6px;height:6px;background:rgb(158,161,167)"></div><div class="a" style="left:374px;top:240px;width:6px;height:6px;background:rgb(216,219,222)"></div><div class="a" style="left:374px;top:246px;width:6px;height:6px;background:rgb(173,180,179)"></div><div class="a" style="left:380px;top:240px;width:6px;height:6px;background:rgb(234,232,230)"></div><div class="a" style="left:380px;top:246px;width:6px;height:6px;background:rgb(188,186,191)"></div>
<div class="a" style="left:3px;top:273px;width:6px;height:6px;background:rgb(215,208,218)"></div><div class="a" style="left:3px;top:279px;width:6px;height:6px;background:rgb(215,209,210)"></div><div class="a" style="left:9px;top:273px;width:6px;height:6px;background:rgb(215,223,222)"></div><div class="a" style="left:9px;top:279px;width:6px;height:6px;background:rgb(207,210,217)"></div><div class="a" style="left:15px;top:273px;width:6px;height:6px;background:rgb(242,235,239)"></div><div class="a" style="left:15px;top:279px;width:6px;height:6px;background:rgb(192,184,186)"></div><div class="a" style="left:21px;top:273px;width:6px;height:6px;background:rgb(241,235,243)"></div><div class="a" style="left:21px;top:279px;width:6px;height:6px;background:rgb(193,190,197)"></div><div class="a" style="left:27px;top:273px;width:6px;height:6px;background:rgb(223,231,237)"></div><div class="a" style="left:27px;top:279px;width:6px;height:6px;background:rgb(197,190,200)"></div><div class="a" style="left:33px;top:273px;width:6px;height:6px;background:rgb(215,208,206)"></div><div class="a" style="left:33px;top:279px;width:6px;height:6px;background:rgb(206,205,206)"></div><div class="a" style="left:39px;top:273px;width:6px;height:6px;background:rgb(210,215,216)"></div><div class="a" style="left:39px;top:279px;width:6px;height:6px;background:rgb(171,171,177)"></div><div class="a" style="left:45px;top:273px;width:6px;height:6px;background:rgb(213,210,206)"></div><div class="a" style="left:45px;top:279px;width:6px;height:6px;background:rgb(212,213,219)"></div><div class="a" style="left:51px;top:273px;width:6px;height:6px;background:rgb(228,236,233)"></div><div class="a" style="left:51px;top:279px;width:6px;height:6px;background:rgb(181,184,183)"></div>
<div class="a" style="left:63px;top:273px;width:6px;height:6px;background:rgb(236,228,238)"></div><div class="a" style="left:63px;top:279px;width:6px;height:6px;background:rgb(189,182,178)"></div><div class="a" style="left:69px;top:273px;width:6px;height:6px;background:rgb(227,222,220)"></div><div class="a" style="left:69px;top:279px;width:6px;height:6px;background:rgb(160,166,164)"></div><div class="a" style="left:75px;top:273px;width:6px;height:6px;background:rgb(209,214,218)"></div><div class="a" style="left:75px;top:279px;width:6px;height:6px;background:rgb(167,165,161)"></div>
<div class="a" style="left:152px;top:273px;width:6px;height:6px;background:rgb(231,233,230)"></div><div class="a" style="left:152px;top:279px;width:6px;height:6px;background:rgb(211,205,202)"></div><div class="a" style="left:158px;top:273px;width:6px;height:6px;background:rgb(219,211,213)"></div><div class="a" style="left:158px;top:279px;width:6px;height:6px;background:rgb(186,180,185)"></div><div class="a" style="left:164px;top:273px;width:6px;height:6px;background:rgb(234,232,228)"></div><div class="a" style="left:164px;top:279px;width:6px;height:6px;background:rgb(213,215,211)"></div><div class="a" style="left:170px;top:273px;width:6px;height:6px;background:rgb(219,214,214)"></div><div class="a" style="left:170px;top:279px;width:6px;height:6px;background:rgb(207,204,214)"></div><div class="a" style="left:176px;top:273px;width:6px;height:6px;background:rgb(232,224,233)"></div><div class="a" style="left:176px;top:279px;width:6px;height:6px;background:rgb(209,202,202)"></div><div class="a" style="left:182px;top:273px;width:6px;height:6px;background:rgb(228,227,232)"></div><div class="a" style="left:182px;top:279px;width:6px;height:6px;background:rgb(163,164,165)"></div><div class="a" style="left:188px;top:273px;width:6px;height:6px;background:rgb(227,225,235)"></div><div class="a" style="left:188px;top:279px;width:6px;height:6px;background:rgb(215,211,214)"></div><div class="a" style="left:194px;top:273px;width:6px;height:6px;background:rgb(226,224,229)"></div><div class="a" style="left:194px;top:279px;width:6px;height:6px;background:rgb(184,181,182)"></div><div class="a" style="left:200px;top:273px;width:6px;height:6px;background:rgb(220,217,215)"></div><div class="a" style="left:200px;top:279px;width:6px;height:6px;background:rgb(175,171,176)"></div><div class="a" style="left:206px;top:273px;width:6px;height:6px;background:rgb(233,227,235)"></div><div class="a" style="left:206px;top:279px;width:6px;height:6px;background:rgb(197,192,194)"></div><div class="a" style="left:212px;top:273px;width:6px;height:6px;background:rgb(232,237,244)"></div><div class="a" style="left:212px;top:279px;width:6px;height:6px;background:rgb(163,160,170)"></div><div class="a" style="left:218px;top:273px;width:6px;height:6px;background:rgb(231,238,248)"></div><div class="a" style="left:218px;top:279px;width:6px;height:6px;background:rgb(193,193,204)"></div><div class="a" style="left:224px;top:273px;width:6px;height:6px;background:rgb(233,225,236)"></div><div class="a" style="left:224px;top:279px;width:6px;height:6px;background:rgb(207,209,214)"></div><div class="a" style="left:230px;top:273px;width:6px;height:6px;background:rgb(204,210,221)"></div><div class="a" style="left:230px;top:279px;width:6px;height:6px;background:rgb(216,210,218)"></div>
<div class="a" style="left:302px;top:273px;width:6px;height:6px;background:rgb(227,230,232)"></div><div class="a" style="left:302px;top:279px;width:6px;height:6px;background:rgb(214,214,214)"></div><div class="a" style="left:308px;top:273px;width:6px;height:6px;background:rgb(238,238,234)"></div><div class="a" style="left:308px;top:279px;width:6px;height:6px;background:rgb(169,171,174)"></div><div class="a" style="left:314px;top:273px;width:6px;height:6px;background:rgb(217,222,227)"></div><div class="a" style="left:314px;top:279px;width:6px;height:6px;background:rgb(181,183,195)"></div><div class="a" style="left:320px;top:273px;width:6px;height:6px;background:rgb(224,229,225)"></div><div class="a" style="left:320px;top:279px;width:6px;height:6px;background:rgb(186,180,185)"></div><div class="a" style="left:326px;top:273px;width:6px;height:6px;background:rgb(216,223,229)"></div><div class="a" style="left:326px;top:279px;width:6px;height:6px;background:rgb(211,210,211)"></div><div class="a" style="left:332px;top:273px;width:6px;height:6px;background:rgb(234,228,239)"></div><div class="a" style="left:332px;top:279px;width:6px;height:6px;background:rgb(187,179,190)"></div><div class="a" style="left:338px;top:273px;width:6px;height:6px;background:rgb(217,218,216)"></div><div class="a" style="left:338px;top:279px;width:6px;height:6px;background:rgb(165,172,179)"></div><div class="a" style="left:344px;top:273px;width:6px;height:6px;background:rgb(230,236,243)"></div><div class="a" style="left:344px;top:279px;width:6px;height:6px;background:rgb(204,212,213)"></div><div class="a" style="left:350px;top:273px;width:6px;height:6px;background:rgb(216,209,210)"></div><div class="a" style="left:350px;top:279px;width:6px;height:6px;background:rgb(175,180,181)"></div><div class="a" style="left:356px;top:273px;width:6px;height:6px;background:rgb(238,235,238)"></div><div class="a" style="left:356px;top:279px;width:6px;height:6px;background:rgb(198,190,187)"></div><div class="a" style="left:362px;top:273px;width:6px;height:6px;background:rgb(207,208,214)"></div><div class="a" style="left:362px;top:279px;width:6px;height:6px;background:rgb(170,169,172)"></div><div class="a" style="left:368px;top:273px;width:6px;height:6px;background:rgb(222,219,227)"></div><div class="a" style="left:368px;top:279px;width:6px;height:6px;background:rgb(175,169,178)"></div><div class="a" style="left:374px;top:273px;width:6px;height:6px;background:rgb(233,229,226)"></div><div class="a" style="left:374px;top:279px;width:6px;height:6px;background:rgb(193,189,185)"></div><div class="a" style="left:380px;top:273px;width:6px;height:6px;background:rgb(231,237,241)"></div><div class="a" style="left:380px;top:279px;width:6px;height:6px;background:rgb(187,186,193)"></div>
<div class="a" style="left:3px;top:306px;width:6px;height:6px;background:rgb(203,211,212)"></div><div class="a" style="left:3px;top:312px;width:6px;height:6px;background:rgb(206,211,220)"></div><div class="a" style="left:9px;top:306px;width:6px;height:6px;background:rgb(224,231,239)"></div><div class="a" style="left:9px;top:312px;width:6px;height:6px;background:rgb(209,204,207)"></div><div class="a" style="left:15px;top:306px;width:6px;height:6px;background:rgb(223,229,238)"></div><div class="a" style="left:15px;top:312px;width:6px;height:6px;background:rgb(162,162,169)"></div><div class="a" style="left:21px;top:306px;width:6px;height:6px;background:rgb(218,213,220)"></div><div class="a" style="left:21px;top:312px;width:6px;height:6px;background:rgb(178,186,189)"></div><div class="a" style="left:27px;top:306px;width:6px;height:6px;background:rgb(233,230,242)"></div><div class="a" style="left:27px;top:312px;width:6px;height:6px;background:rgb(178,174,181)"></div><div class="a" style="left:33px;top:306px;width:6px;height:6px;background:rgb(233,230,235)"></div><div class="a" style="left:33px;top:312px;width:6px;height:6px;background:rgb(196,199,202)"></div><div class="a" style="left:39px;top:306px;width:6px;height:6px;background:rgb(211,219,222)"></div><div class="a" style="left:39px;top:312px;width:6px;height:6px;background:rgb(198,201,212)"></div><div class="a" style="left:45px;top:306px;width:6px;height:6px;background:rgb(214,216,216)"></div><div class="a" style="left:45px;top:312px;width:6px;height:6px;background:rgb(203,196,208)"></div><div class="a" style="left:51px;top:306px;width:6px;height:6px;background:rgb(232,226,227)"></div><div class="a" style="left:51px;top:312px;width:6px;height:6px;background:rgb(212,208,212)"></div>
<div class="a" style="left:63px;top:306px;width:6px;height:6px;background:rgb(224,220,218)"></div><div class="a" style="left:63px;top:312px;width:6px;height:6px;background:rgb(177,173,172)"></div><div class="a" style="left:69px;top:306px;width:6px;height:6px;background:rgb(217,214,221)"></div><div class="a" style="left:69px;top:312px;width:6px;height:6px;background:rgb(177,176,184)"></div><div class="a" style="left:75px;top:306px;width:6px;height:6px;background:rgb(233,228,228)"></div><div class="a" style="left:75px;top:312px;width:6px;height:6px;background:rgb(204,201,213)"></div><div class="a" style="left:81px;top:306px;width:6px;height:6px;background:rgb(211,210,216)"></div><div class="a" style="left:81px;top:312px;width:6px;height:6px;background:rgb(198,198,200)"></div><div class="a" style="left:87px;top:306px;width:6px;height:6px;background:rgb(218,214,216)"></div><div class="a" style="left:87px;top:312px;width:6px;height:6px;background:rgb(199,201,213)"></div><div class="a" style="left:93px;top:306px;width:6px;height:6px;background:rgb(218,215,219)"></div><div class="a" style="left:93px;top:312px;width:6px;height:6px;background:rgb(187,188,187)"></div>
<div class="a" style="left:152px;top:306px;width:6px;height:6px;background:rgb(226,231,243)"></div><div class="a" style="left:152px;top:312px;width:6px;height:6px;background:rgb(188,196,205)"></div><div class="a" style="left:158px;top:306px;width:6px;height:6px;background:rgb(228,235,240)"></div><div class="a" style="left:158px;top:312px;width:6px;height:6px;background:rgb(182,179,179)"></div><div class="a" style="left:164px;top:306px;width:6px;height:6px;background:rgb(239,231,231)"></div><div class="a" style="left:164px;top:312px;width:6px;height:6px;background:rgb(173,176,187)"></div><div class="a" style="left:170px;top:306px;width:6px;height:6px;background:rgb(236,232,236)"></div><div class="a" style="left:170px;top:312px;width:6px;height:6px;background:rgb(192,193,194)"></div><div class="a" style="left:176px;top:306px;width:6px;height:6px;background:rgb(236,229,227)"></div><div class="a" style="left:176px;top:312px;width:6px;height:6px;background:rgb(175,172,168)"></div><div class="a" style="left:182px;top:306px;width:6px;height:6px;background:rgb(233,226,223)"></div><div class="a" style="left:182px;top:312px;width:6px;height:6px;background:rgb(200,195,204)"></div><div class="a" style="left:188px;top:306px;width:6px;height:6px;background:rgb(231,236,244)"></div><div class="a" style="left:188px;top:312px;width:6px;height:6px;background:rgb(185,180,185)"></div><div class="a" style="left:194px;top:306px;width:6px;height:6px;background:rgb(223,219,217)"></div><div class="a" style="left:194px;top:312px;width:6px;height:6px;background:rgb(187,189,187)"></div><div class="a" style="left:200px;top:306px;width:6px;height:6px;background:rgb(229,229,239)"></div><div class="a" style="left:200px;top:312px;width:6px;height:6px;background:rgb(204,209,213)"></div><div class="a" style="left:206px;top:306px;width:6px;height:6px;background:rgb(219,225,228)"></div><div class="a" style="left:206px;top:312px;width:6px;height:6px;background:rgb(200,197,201)"></div><div class="a" style="left:212px;top:306px;width:6px;height:6px;background:rgb(231,232,238)"></div><div class="a" style="left:212px;top:312px;width:6px;height:6px;background:rgb(220,215,212)"></div><div class="a" style="left:218px;top:306px;width:6px;height:6px;background:rgb(202,210,210)"></div><div class="a" style="left:218px;top:312px;width:6px;height:6px;background:rgb(171,172,171)"></div><div class="a" style="left:224px;top:306px;width:6px;height:6px;background:rgb(217,214,215)"></div><div class="a" style="left:224px;top:312px;width:6px;height:6px;background:rgb(188,194,195)"></div><div class="a" style="left:230px;top:306px;width:6px;height:6px;background:rgb(228,220,230)"></div><div class="a" style="left:230px;top:312px;width:6px;height:6px;background:rgb(156,161,167)"></div>
<div class="a" style="left:302px;top:306px;width:6px;height:6px;background:rgb(218,214,223)"></div><div class="a" style="left:302px;top:312px;width:6px;height:6px;background:rgb(208,209,208)"></div><div class="a" style="left:308px;top:306px;width:6px;height:6px;background:rgb(203,209,207)"></div><div class="a" style="left:308px;top:312px;width:6px;height:6px;background:rgb(196,195,197)"></div><div class="a" style="left:314px;top:306px;width:6px;height:6px;background:rgb(219,213,214)"></div><div class="a" style="left:314px;top:312px;width:6px;height:6px;background:rgb(168,165,163)"></div><div class="a" style="left:320px;top:306px;width:6px;height:6px;background:rgb(243,236,248)"></div><div class="a" style="left:320px;top:312px;width:6px;height:6px;background:rgb(198,202,202)"></div><div class="a" style="left:326px;top:306px;width:6px;height:6px;background:rgb(214,215,226)"></div><div class="a" style="left:326px;top:312px;width:6px;height:6px;background:rgb(181,177,174)"></div><div class="a" style="left:332px;top:306px;width:6px;height:6px;background:rgb(235,236,241)"></div><div class="a" style="left:332px;top:312px;width:6px;height:6px;background:rgb(215,212,210)"></div><div class="a" style="left:338px;top:306px;width:6px;height:6px;background:rgb(225,228,229)"></div><div class="a" style="left:338px;top:312px;width:6px;height:6px;background:rgb(192,200,210)"></div><div class="a" style="left:344px;top:306px;width:6px;height:6px;background:rgb(210,211,210)"></div><div class="a" style="left:344px;top:312px;width:6px;height:6px;background:rgb(211,214,214)"></div><div class="a" style="left:350px;top:306px;width:6px;height:6px;background:rgb(227,225,227)"></div><div class="a" style="left:350px;top:312px;width:6px;height:6px;background:rgb(200,195,191)"></div><div class="a" style="left:356px;top:306px;width:6px;height:6px;background:rgb(211,217,227)"></div><div class="a" style="left:356px;top:312px;width:6px;height:6px;background:rgb(183,175,185)"></div><div class="a" style="left:362px;top:306px;width:6px;height:6px;background:rgb(210,215,223)"></div><div class="a" style="left:362px;top:312px;width:6px;height:6px;background:rgb(211,214,217)"></div><div class="a" style="left:368px;top:306px;width:6px;height:6px;background:rgb(237,229,233)"></div><div class="a" style="left:368px;top:312px;width:6px;height:6px;background:rgb(162,166,176)"></div><div class="a" style="left:374px;top:306px;width:6px;height:6px;background:rgb(238,233,229)"></div><div class="a" style="left:374px;top:312px;width:6px;height:6px;background:rgb(202,198,197)"></div><div class="a" style="left:380px;top:306px;width:6px;height:6px;background:rgb(233,234,243)"></div><div class="a" style="left:380px;top:312px;width:6px;height:6px;background:rgb(212,215,213)"></div>
<div class="a" style="left:302px;top:339px;width:6px;height:6px;background:rgb(217,210,206)"></div><div class="a" style="left:302px;top:345px;width:6px;height:6px;background:rgb(208,211,214)"></div><div class="a" style="left:308px;top:339px;width:6px;height:6px;background:rgb(220,218,229)"></div><div class="a" style="left:308px;top:345px;width:6px;height:6px;background:rgb(210,204,209)"></div><div class="a" style="left:314px;top:339px;width:6px;height:6px;background:rgb(205,210,217)"></div><div class="a" style="left:314px;top:345px;width:6px;height:6px;background:rgb(190,197,193)"></div><div class="a" style="left:320px;top:339px;width:6px;height:6px;background:rgb(241,238,244)"></div><div class="a" style="left:320px;top:345px;width:6px;height:6px;background:rgb(156,162,163)"></div><div class="a" style="left:326px;top:339px;width:6px;height:6px;background:rgb(211,216,212)"></div><div class="a" style="left:326px;top:345px;width:6px;height:6px;background:rgb(216,215,226)"></div><div class="a" style="left:332px;top:339px;width:6px;height:6px;background:rgb(220,228,237)"></div><div class="a" style="left:332px;top:345px;width:6px;height:6px;background:rgb(209,205,202)"></div><div class="a" style="left:338px;top:339px;width:6px;height:6px;background:rgb(218,216,216)"></div><div class="a" style="left:338px;top:345px;width:6px;height:6px;background:rgb(217,214,216)"></div><div class="a" style="left:344px;top:339px;width:6px;height:6px;background:rgb(222,228,234)"></div><div class="a" style="left:344px;top:345px;width:6px;height:6px;background:rgb(211,210,218)"></div><div class="a" style="left:350px;top:339px;width:6px;height:6px;background:rgb(216,212,216)"></div><div class="a" style="left:350px;top:345px;width:6px;height:6px;background:rgb(163,165,176)"></div><div class="a" style="left:356px;top:339px;width:6px;height:6px;background:rgb(237,229,227)"></div><div class="a" style="left:356px;top:345px;width:6px;height:6px;background:rgb(185,184,182)"></div><div class="a" style="left:362px;top:339px;width:6px;height:6px;background:rgb(235,227,233)"></div><div class="a" style="left:362px;top:345px;width:6px;height:6px;background:rgb(202,203,205)"></div><div class="a" style="left:368px;top:339px;width:6px;height:6px;background:rgb(223,215,223)"></div><div class="a" style="left:368px;top:345px;width:6px;height:6px;background:rgb(190,189,189)"></div><div class="a" style="left:374px;top:339px;width:6px;height:6px;background:rgb(204,212,215)"></div><div class="a" style="left:374px;top:345px;width:6px;height:6px;background:rgb(179,171,181)"></div><div class="a" style="left:380px;top:339px;width:6px;height:6px;background:rgb(224,219,227)"></div><div class="a" style="left:380px;top:345px;width:6px;height:6px;background:rgb(213,207,219)"></div>
<div class="a" style="left:302px;top:372px;width:6px;height:6px;background:rgb(226,225,233)"></div><div class="a" style="left:302px;top:378px;width:6px;height:6px;background:rgb(198,194,199)"></div><div class="a" style="left:308px;top:372px;width:6px;height:6px;background:rgb(212,210,209)"></div><div class="a" style="left:308px;top:378px;width:6px;height:6px;background:rgb(169,165,174)"></div><div class="a" style="left:314px;top:372px;width:6px;height:6px;background:rgb(222,216,221)"></div><div class="a" style="left:314px;top:378px;width:6px;height:6px;background:rgb(165,166,176)"></div><div class="a" style="left:320px;top:372px;width:6px;height:6px;background:rgb(241,234,235)"></div><div class="a" style="left:320px;top:378px;width:6px;height:6px;background:rgb(210,215,223)"></div><div class="a" style="left:326px;top:372px;width:6px;height:6px;background:rgb(237,230,232)"></div><div class="a" style="left:326px;top:378px;width:6px;height:6px;background:rgb(211,205,210)"></div><div class="a" style="left:332px;top:372px;width:6px;height:6px;background:rgb(209,208,213)"></div><div class="a" style="left:332px;top:378px;width:6px;height:6px;background:rgb(160,164,166)"></div><div class="a" style="left:338px;top:372px;width:6px;height:6px;background:rgb(224,231,228)"></div><div class="a" style="left:338px;top:378px;width:6px;height:6px;background:rgb(195,190,202)"></div><div class="a" style="left:344px;top:372px;width:6px;height:6px;background:rgb(224,220,229)"></div><div class="a" style="left:344px;top:378px;width:6px;height:6px;background:rgb(202,210,210)"></div><div class="a" style="left:350px;top:372px;width:6px;height:6px;background:rgb(224,232,240)"></div><div class="a" style="left:350px;top:378px;width:6px;height:6px;background:rgb(220,215,225)"></div><div class="a" style="left:356px;top:372px;width:6px;height:6px;background:rgb(210,211,212)"></div><div class="a" style="left:356px;top:378px;width:6px;height:6px;background:rgb(210,213,220)"></div><div class="a" style="left:362px;top:372px;width:6px;height:6px;background:rgb(214,211,218)"></div><div class="a" style="left:362px;top:378px;width:6px;height:6px;background:rgb(192,200,205)"></div><div class="a" style="left:368px;top:372px;width:6px;height:6px;background:rgb(212,219,223)"></div><div class="a" style="left:368px;top:378px;width:6px;height:6px;background:rgb(193,191,187)"></div><div class="a" style="left:374px;top:372px;width:6px;height:6px;background:rgb(218,214,211)"></div><div class="a" style="left:374px;top:378px;width:6px;height:6px;background:rgb(168,176,174)"></div><div class="a" style="left:380px;top:372px;width:6px;height:6px;background:rgb(217,215,226)"></div><div class="a" style="left:380px;top:378px;width:6px;height:6px;background:rgb(171,164,172)"></div>
<div class="a" style="left:3px;top:405px;width:6px;height:6px;background:rgb(212,208,204)"></div><div class="a" style="left:3px;top:411px;width:6px;height:6px;background:rgb(185,179,179)"></div><div class="a" style="left:9px;top:405px;width:6px;height:6px;background:rgb(233,229,232)"></div><div class="a" style="left:9px;top:411px;width:6px;height:6px;background:rgb(174,169,181)"></div><div class="a" style="left:15px;top:405px;width:6px;height:6px;background:rgb(205,211,209)"></div><div class="a" style="left:15px;top:411px;width:6px;height:6px;background:rgb(210,215,218)"></div><div class="a" style="left:21px;top:405px;width:6px;height:6px;background:rgb(227,235,238)"></div><div class="a" style="left:21px;top:411px;width:6px;height:6px;background:rgb(206,204,210)"></div><div class="a" style="left:27px;top:405px;width:6px;height:6px;background:rgb(215,222,231)"></div><div class="a" style="left:27px;top:411px;width:6px;height:6px;background:rgb(168,174,180)"></div><div class="a" style="left:33px;top:405px;width:6px;height:6px;background:rgb(218,211,214)"></div><div class="a" style="left:33px;top:411px;width:6px;height:6px;background:rgb(181,184,190)"></div><div class="a" style="left:39px;top:405px;width:6px;height:6px;background:rgb(216,213,220)"></div><div class="a" style="left:39px;top:411px;width:6px;height:6px;background:rgb(197,195,194)"></div><div class="a" style="left:45px;top:405px;width:6px;height:6px;background:rgb(234,237,247)"></div><div class="a" style="left:45px;top:411px;width:6px;height:6px;background:rgb(167,165,166)"></div><div class="a" style="left:51px;top:405px;width:6px;height:6px;background:rgb(218,219,217)"></div><div class="a" style="left:51px;top:411px;width:6px;height:6px;background:rgb(211,215,226)"></div>
<div class="a" style="left:63px;top:405px;width:6px;height:6px;background:rgb(226,225,235)"></div><div class="a" style="left:63px;top:411px;width:6px;height:6px;background:rgb(194,193,205)"></div><div class="a" style="left:69px;top:405px;width:6px;height:6px;background:rgb(215,211,209)"></div><div class="a" style="left:69px;top:411px;width:6px;height:6px;background:rgb(167,172,170)"></div><div class="a" style="left:75px;top:405px;width:6px;height:6px;background:rgb(235,236,240)"></div><div class="a" style="left:75px;top:411px;width:6px;height:6px;background:rgb(178,180,181)"></div><div class="a" style="left:81px;top:405px;width:6px;height:6px;background:rgb(221,213,212)"></div><div class="a" style="left:81px;top:411px;width:6px;height:6px;background:rgb(200,204,206)"></div><div class="a" style="left:87px;top:405px;width:6px;height:6px;background:rgb(220,218,221)"></div><div class="a" style="left:87px;top:411px;width:6px;height:6px;background:rgb(161,164,172)"></div><div class="a" style="left:93px;top:405px;width:6px;height:6px;background:rgb(222,230,233)"></div><div class="a" style="left:93px;top:411px;width:6px;height:6px;background:rgb(210,210,215)"></div>
<div class="a" style="left:152px;top:405px;width:6px;height:6px;background:rgb(212,209,219)"></div><div class="a" style="left:152px;top:411px;width:6px;height:6px;background:rgb(185,183,188)"></div><div class="a" style="left:158px;top:405px;width:6px;height:6px;background:rgb(224,218,217)"></div><div class="a" style="left:158px;top:411px;width:6px;height:6px;background:rgb(216,214,216)"></div><div class="a" style="left:164px;top:405px;width:6px;height:6px;background:rgb(230,230,241)"></div><div class="a" style="left:164px;top:411px;width:6px;height:6px;background:rgb(180,174,179)"></div><div class="a" style="left:170px;top:405px;width:6px;height:6px;background:rgb(228,230,237)"></div><div class="a" style="left:170px;top:411px;width:6px;height:6px;background:rgb(206,211,222)"></div><div class="a" style="left:176px;top:405px;width:6px;height:6px;background:rgb(219,211,222)"></div><div class="a" style="left:176px;top:411px;width:6px;height:6px;background:rgb(200,203,209)"></div><div class="a" style="left:182px;top:405px;width:6px;height:6px;background:rgb(225,229,226)"></div><div class="a" style="left:182px;top:411px;width:6px;height:6px;background:rgb(174,181,185)"></div><div class="a" style="left:188px;top:405px;width:6px;height:6px;background:rgb(207,208,213)"></div><div class="a" style="left:188px;top:411px;width:6px;height:6px;background:rgb(183,183,184)"></div><div class="a" style="left:194px;top:405px;width:6px;height:6px;background:rgb(233,227,227)"></div><div class="a" style="left:194px;top:411px;width:6px;height:6px;background:rgb(171,169,181)"></div><div class="a" style="left:200px;top:405px;width:6px;height:6px;background:rgb(227,219,221)"></div><div class="a" style="left:200px;top:411px;width:6px;height:6px;background:rgb(205,204,210)"></div><div class="a" style="left:206px;top:405px;width:6px;height:6px;background:rgb(215,221,230)"></div><div class="a" style="left:206px;top:411px;width:6px;height:6px;background:rgb(169,174,178)"></div><div class="a" style="left:212px;top:405px;width:6px;height:6px;background:rgb(221,226,226)"></div><div class="a" style="left:212px;top:411px;width:6px;height:6px;background:rgb(184,192,203)"></div><div class="a" style="left:218px;top:405px;width:6px;height:6px;background:rgb(222,222,228)"></div><div class="a" style="left:218px;top:411px;width:6px;height:6px;background:rgb(176,178,183)"></div><div class="a" style="left:224px;top:405px;width:6px;height:6px;background:rgb(214,220,216)"></div><div class="a" style="left:224px;top:411px;width:6px;height:6px;background:rgb(172,167,165)"></div><div class="a" style="left:230px;top:405px;width:6px;height:6px;background:rgb(241,233,233)"></div><div class="a" style="left:230px;top:411px;width:6px;height:6px;background:rgb(203,206,218)"></div>
<div class="a" style="left:302px;top:405px;width:6px;height:6px;background:rgb(221,222,226)"></div><div class="a" style="left:302px;top:411px;width:6px;height:6px;background:rgb(186,181,178)"></div><div class="a" style="left:308px;top:405px;width:6px;height:6px;background:rgb(219,220,216)"></div><div class="a" style="left:308px;top:411px;width:6px;height:6px;background:rgb(192,184,188)"></div><div class="a" style="left:314px;top:405px;width:6px;height:6px;background:rgb(217,217,218)"></div><div class="a" style="left:314px;top:411px;width:6px;height:6px;background:rgb(216,213,209)"></div><div class="a" style="left:320px;top:405px;width:6px;height:6px;background:rgb(209,215,216)"></div><div class="a" style="left:320px;top:411px;width:6px;height:6px;background:rgb(166,168,166)"></div><div class="a" style="left:326px;top:405px;width:6px;height:6px;background:rgb(213,221,231)"></div><div class="a" style="left:326px;top:411px;width:6px;height:6px;background:rgb(194,186,197)"></div><div class="a" style="left:332px;top:405px;width:6px;height:6px;background:rgb(209,215,221)"></div><div class="a" style="left:332px;top:411px;width:6px;height:6px;background:rgb(217,209,213)"></div><div class="a" style="left:338px;top:405px;width:6px;height:6px;background:rgb(227,224,220)"></div><div class="a" style="left:338px;top:411px;width:6px;height:6px;background:rgb(172,173,183)"></div><div class="a" style="left:344px;top:405px;width:6px;height:6px;background:rgb(234,227,223)"></div><div class="a" style="left:344px;top:411px;width:6px;height:6px;background:rgb(214,207,217)"></div><div class="a" style="left:350px;top:405px;width:6px;height:6px;background:rgb(231,229,230)"></div><div class="a" style="left:350px;top:411px;width:6px;height:6px;background:rgb(175,181,188)"></div><div class="a" style="left:356px;top:405px;width:6px;height:6px;background:rgb(226,234,238)"></div><div class="a" style="left:356px;top:411px;width:6px;height:6px;background:rgb(193,187,193)"></div><div class="a" style="left:362px;top:405px;width:6px;height:6px;background:rgb(214,219,215)"></div><div class="a" style="left:362px;top:411px;width:6px;height:6px;background:rgb(196,196,196)"></div><div class="a" style="left:368px;top:405px;width:6px;height:6px;background:rgb(240,232,231)"></div><div class="a" style="left:368px;top:411px;width:6px;height:6px;background:rgb(184,178,183)"></div><div class="a" style="left:374px;top:405px;width:6px;height:6px;background:rgb(229,222,220)"></div><div class="a" style="left:374px;top:411px;width:6px;height:6px;background:rgb(192,192,197)"></div><div class="a" style="left:380px;top:405px;width:6px;height:6px;background:rgb(212,209,218)"></div><div class="a" style="left:380px;top:411px;width:6px;height:6px;background:rgb(176,177,183)"></div>
<div class="a" style="left:152px;top:438px;width:6px;height:6px;background:rgb(211,212,223)"></div><div class="a" style="left:152px;top:444px;width:6px;height:6px;background:rgb(176,173,171)"></div><div class="a" style="left:158px;top:438px;width:6px;height:6px;background:rgb(220,228,224)"></div><div class="a" style="left:158px;top:444px;width:6px;height:6px;background:rgb(202,195,204)"></div><div class="a" style="left:164px;top:438px;width:6px;height:6px;background:rgb(221,217,225)"></div><div class="a" style="left:164px;top:444px;width:6px;height:6px;background:rgb(180,177,187)"></div><div class="a" style="left:170px;top:438px;width:6px;height:6px;background:rgb(223,230,242)"></div><div class="a" style="left:170px;top:444px;width:6px;height:6px;background:rgb(195,187,186)"></div><div class="a" style="left:176px;top:438px;width:6px;height:6px;background:rgb(212,213,213)"></div><div class="a" style="left:176px;top:444px;width:6px;height:6px;background:rgb(214,212,219)"></div><div class="a" style="left:182px;top:438px;width:6px;height:6px;background:rgb(208,210,215)"></div><div class="a" style="left:182px;top:444px;width:6px;height:6px;background:rgb(200,192,200)"></div><div class="a" style="left:188px;top:438px;width:6px;height:6px;background:rgb(219,216,222)"></div><div class="a" style="left:188px;top:444px;width:6px;height:6px;background:rgb(203,205,201)"></div><div class="a" style="left:194px;top:438px;width:6px;height:6px;background:rgb(216,224,234)"></div><div class="a" style="left:194px;top:444px;width:6px;height:6px;background:rgb(167,165,170)"></div><div class="a" style="left:200px;top:438px;width:6px;height:6px;background:rgb(239,234,233)"></div><div class="a" style="left:200px;top:444px;width:6px;height:6px;background:rgb(163,168,175)"></div><div class="a" style="left:206px;top:438px;width:6px;height:6px;background:rgb(229,234,235)"></div><div class="a" style="left:206px;top:444px;width:6px;height:6px;background:rgb(166,168,170)"></div><div class="a" style="left:212px;top:438px;width:6px;height:6px;background:rgb(235,229,240)"></div><div class="a" style="left:212px;top:444px;width:6px;height:6px;background:rgb(177,179,185)"></div><div class="a" style="left:218px;top:438px;width:6px;height:6px;background:rgb(227,226,233)"></div><div class="a" style="left:218px;top:444px;width:6px;height:6px;background:rgb(203,200,202)"></div><div class="a" style="left:224px;top:438px;width:6px;height:6px;background:rgb(222,219,219)"></div><div class="a" style="left:224px;top:444px;width:6px;height:6px;background:rgb(178,178,180)"></div><div class="a" style="left:230px;top:438px;width:6px;height:6px;background:rgb(224,221,231)"></div><div class="a" style="left:230px;top:444px;width:6px;height:6px;background:rgb(210,204,203)"></div>
<div class="a" style="left:302px;top:438px;width:6px;height:6px;background:rgb(202,210,219)"></div><div class="a" style="left:302px;top:444px;width:6px;height:6px;background:rgb(208,202,212)"></div><div class="a" style="left:308px;top:438px;width:6px;height:6px;background:rgb(239,231,241)"></div><div class="a" style="left:308px;top:444px;width:6px;height:6px;background:rgb(183,182,192)"></div><div class="a" style="left:314px;top:438px;width:6px;height:6px;background:rgb(212,219,223)"></div><div class="a" style="left:314px;top:444px;width:6px;height:6px;background:rgb(165,170,167)"></div><div class="a" style="left:320px;top:438px;width:6px;height:6px;background:rgb(203,210,215)"></div><div class="a" style="left:320px;top:444px;width:6px;height:6px;background:rgb(189,183,195)"></div><div class="a" style="left:326px;top:438px;width:6px;height:6px;background:rgb(224,222,218)"></div><div class="a" style="left:326px;top:444px;width:6px;height:6px;background:rgb(201,209,211)"></div><div class="a" style="left:332px;top:438px;width:6px;height:6px;background:rgb(223,217,222)"></div><div class="a" style="left:332px;top:444px;width:6px;height:6px;background:rgb(211,207,210)"></div><div class="a" style="left:338px;top:438px;width:6px;height:6px;background:rgb(229,227,235)"></div><div class="a" style="left:338px;top:444px;width:6px;height:6px;background:rgb(216,213,215)"></div><div class="a" style="left:344px;top:438px;width:6px;height:6px;background:rgb(235,228,231)"></div><div class="a" style="left:344px;top:444px;width:6px;height:6px;background:rgb(212,214,226)"></div><div class="a" style="left:350px;top:438px;width:6px;height:6px;background:rgb(235,237,237)"></div><div class="a" style="left:350px;top:444px;width:6px;height:6px;background:rgb(203,209,213)"></div><div class="a" style="left:356px;top:438px;width:6px;height:6px;background:rgb(237,231,236)"></div><div class="a" style="left:356px;top:444px;width:6px;height:6px;background:rgb(198,202,214)"></div><div class="a" style="left:362px;top:438px;width:6px;height:6px;background:rgb(241,234,233)"></div><div class="a" style="left:362px;top:444px;width:6px;height:6px;background:rgb(190,186,196)"></div><div class="a" style="left:368px;top:438px;width:6px;height:6px;background:rgb(216,217,214)"></div><div class="a" style="left:368px;top:444px;width:6px;height:6px;background:rgb(185,191,195)"></div><div class="a" style="left:374px;top:438px;width:6px;height:6px;background:rgb(209,210,218)"></div><div class="a" style="left:374px;top:444px;width:6px;height:6px;background:rgb(167,161,161)"></div><div class="a" style="left:380px;top:438px;width:6px;height:6px;background:rgb(238,234,231)"></div><div class="a" style="left:380px;top:444px;width:6px;height:6px;background:rgb(207,212,223)"></div>
</div>
<div class="a" style="left:0;top:546px;width:1330px;height:8px;background:rgba(255,255,255,.75)"></div>
<div class="a" style="left:0;top:547px;width:395px;height:7px;background:#bdbdbd"></div>
<div class="a" style="left:1322px;top:67px;width:8px;height:480px;background:rgba(255,255,255,.85)"></div>
<div class="a" style="left:1322px;top:71px;width:6px;height:166px;background:#bdbdbd"></div>
</div>
<div class="a" style="left:257px;top:654px;width:1330px;height:49px;background:#f5f5f5"></div>
<div class="a" style="left:669px;top:670px"><svg width="16" height="16" viewBox="0 0 24 24" ><path fill="#1976d2" d="M18,3H6V7H18M19,12A1,1 0 0,1 18,11A1,1 0 0,1 19,10A1,1 0 0,1 20,11A1,1 0 0,1 19,12M16,19H8V14H16M19,8H5A3,3 0 0,0 2,11V17H6V21H18V17H22V11A3,3 0 0,0 19,8Z"/></svg></div>
<div class="a" style="left:690px;top:671px;font-size:13.5px;line-height:16px;color:#1976d2;-webkit-text-stroke:0.4px #1976d2;letter-spacing:0.1px">STAMPA</div>
<div class="a" style="left:746px;top:667.5px"><svg width="22" height="22" viewBox="0 0 24 24" ><path fill="#1976d2" d="M7,10L12,15L17,10H7Z"/></svg></div>
<div class="a" style="left:798px;top:670px"><svg width="16" height="16" viewBox="0 0 24 24" ><path fill="#1976d2" d="M2,21L23,12L2,3V10L17,12L2,14V21Z"/></svg></div>
<div class="a" style="left:819px;top:671px;font-size:13.5px;line-height:16px;color:#1976d2;-webkit-text-stroke:0.4px #1976d2;letter-spacing:0.1px">INVIA</div>
<svg class="a" style="left:887px;top:671px" width="16" height="16" viewBox="0 0 24 24"><g fill="none" stroke="#1976d2" stroke-width="1.7" stroke-linejoin="round"><path d="M8.5,4.2H20.8Q22,4.2 22,5.4V18.3Q22,19.5 20.8,19.5H18"/><path d="M1.8,7L8.5,4.6L17.5,13M1.8,7L6.8,11.2L9.8,11.5L10.6,15.5"/><path d="M8,10.3L12.5,9.5"/></g><rect x="7.4" y="15" width="11" height="4.8" rx="1" fill="#1976d2"/></svg>
<div class="a" style="left:908px;top:671px;font-size:13.5px;line-height:16px;color:#1976d2;-webkit-text-stroke:0.4px #1976d2;letter-spacing:0.1px">FATT. ELETTR.</div>
<div class="a" style="left:1240px;top:663px;width:104px;height:32px;border-radius:5px;background:#4f9ae6"></div>
<div class="a" style="left:1255px;top:670px"><svg width="18" height="18" viewBox="0 0 24 24" ><path fill="#fff" d="M3.9,12C3.9,10.29 5.29,8.9 7,8.9H11V7H7A5,5 0 0,0 2,12A5,5 0 0,0 7,17H11V15.1H7C5.29,15.1 3.9,13.71 3.9,12M8,13H16V11H8V13M17,7H13V8.9H17C18.71,8.9 20.1,10.29 20.1,12C20.1,13.71 18.71,15.1 17,15.1H13V17H17A5,5 0 0,0 22,12A5,5 0 0,0 17,7Z"/></svg></div>
<div class="a" style="left:1277px;top:671px;font-size:13.5px;line-height:16px;color:#fff;-webkit-text-stroke:0.4px #fff;letter-spacing:0.1px">LINK</div>
<div class="a" style="left:1309.5px;top:667.5px"><svg width="22" height="22" viewBox="0 0 24 24" ><path fill="#fff" d="M7,10L12,15L17,10H7Z"/></svg></div>
<div class="a" style="left:1361px;top:670px"><svg width="16" height="16" viewBox="0 0 24 24" ><path fill="#1976d2" d="M20.71,7.04C21.1,6.65 21.1,6 20.71,5.63L18.37,3.29C18,2.9 17.35,2.9 16.96,3.29L15.12,5.12L18.87,8.87M3,17.25V21H6.75L17.81,9.93L14.06,6.18L3,17.25Z"/></svg></div>
<div class="a" style="left:1381px;top:671px;font-size:13.5px;line-height:16px;color:#1976d2;-webkit-text-stroke:0.4px #1976d2;letter-spacing:0.1px">MODIFICA</div>
<div class="a" style="left:1478px;top:670px"><svg width="16" height="16" viewBox="0 0 24 24" ><path fill="#1976d2" d="M16,12A2,2 0 0,1 18,10A2,2 0 0,1 20,12A2,2 0 0,1 18,14A2,2 0 0,1 16,12M10,12A2,2 0 0,1 12,10A2,2 0 0,1 14,12A2,2 0 0,1 12,14A2,2 0 0,1 10,12M4,12A2,2 0 0,1 6,10A2,2 0 0,1 8,12A2,2 0 0,1 6,14A2,2 0 0,1 4,12Z"/></svg></div>
<div class="a" style="left:1500px;top:671px;font-size:13.5px;line-height:16px;color:#1976d2;-webkit-text-stroke:0.4px #1976d2;letter-spacing:0.1px">ALTRO</div>
<div class="a" style="left:1544px;top:667.5px"><svg width="22" height="22" viewBox="0 0 24 24" ><path fill="#1976d2" d="M7,10L12,15L17,10H7Z"/></svg></div>
<div class="a" style="left:257px;top:703px;width:1330px;height:49px;background:#fff"></div>
<div class="a" style="left:273px;top:721px"><svg width="16" height="16" viewBox="0 0 24 24" ><path fill="#bdbdbd" d="M7,5H21V7H7V5M7,13V11H21V13H7M4,4.5A1.5,1.5 0 0,1 5.5,6A1.5,1.5 0 0,1 4,7.5A1.5,1.5 0 0,1 2.5,6A1.5,1.5 0 0,1 4,4.5M4,10.5A1.5,1.5 0 0,1 5.5,12A1.5,1.5 0 0,1 4,13.5A1.5,1.5 0 0,1 2.5,12A1.5,1.5 0 0,1 4,10.5M7,19V17H21V19H7M4,16.5A1.5,1.5 0 0,1 5.5,18A1.5,1.5 0 0,1 4,19.5A1.5,1.5 0 0,1 2.5,18A1.5,1.5 0 0,1 4,16.5Z"/></svg></div>
<div class="a" style="left:293px;top:720px"><svg width="18" height="18" viewBox="0 0 24 24" ><path fill="#b5b5b5" d="M7,10L12,15L17,10H7Z"/></svg></div>
<div class="a" style="left:1013px;width:300px;text-align:right;top:721px;font-size:14px;line-height:16px;color:#757575">Elementi per pagina</div>
<div class="a" style="left:1325px;top:721px;font-size:14px;line-height:16px;color:#212121">50</div>
<div class="a" style="left:1363px;top:719px"><svg width="18" height="18" viewBox="0 0 24 24" ><path fill="#616161" d="M7,10L12,15L17,10H7Z"/></svg></div>
<div class="a" style="left:1324px;top:743px;width:60px;height:1px;background:#c8c8c8"></div>
<div class="a" style="left:1405px;top:721px;font-size:14px;line-height:16px;color:#616161">1-50 di 115</div>
<div class="a" style="left:1499px;top:717px"><svg width="24" height="24" viewBox="0 0 24 24" ><path fill="#c0c0c0" d="M15.41,16.58L10.83,12L15.41,7.41L14,6L8,12L14,18L15.41,16.58Z"/></svg></div>
<div class="a" style="left:1551px;top:717px"><svg width="24" height="24" viewBox="0 0 24 24" ><path fill="#1976d2" d="M8.59,16.58L13.17,12L8.59,7.41L10,6L16,12L10,18L8.59,16.58Z"/></svg></div>
<div class="a" style="left:973px;top:501px;width:266px;height:241px;background:#fff;border-radius:5px;box-shadow:0 5px 5px -3px rgba(0,0,0,.2),0 8px 10px 1px rgba(0,0,0,.14),0 3px 14px 2px rgba(0,0,0,.12)">
<div class="mi" style="top:8px"><div class="ic"><svg width="15" height="15" viewBox="0 0 24 24" ><path fill="#bdbdbd" d="M13,8.5H11V6.5H13V8.5M13,13H11V11H13V13M13,17.5H11V15.5H13V17.5M22,10V6C22,4.89 21.1,4 20,4H4A2,2 0 0,0 2,6V10C3.11,10 4,10.9 4,12A2,2 0 0,1 2,14V18A2,2 0 0,0 4,20H20A2,2 0 0,0 22,18V14A2,2 0 0,1 20,12A2,2 0 0,1 22,10Z"/></svg></div><div class="tx" style="color:#9e9e9e">Elenco prenotazioni</div><div class="ob"><svg width="25" height="22" viewBox="0 0 25 22" style="position:absolute;left:0;top:0"><path fill="#fff" d="M12.2,6.4H14.9V15.4H12.3V9.3L9.9,10.1V8.1Z"/></svg></div></div>
<div class="mi" style="top:40px"><div class="ic"><svg width="15" height="15" viewBox="0 0 24 24" ><path fill="#757575" d="M19,7H11V14H3V5H1V20H3V17H21V20H23V11A4,4 0 0,0 19,7M7,13A3,3 0 0,0 10,10A3,3 0 0,0 7,7A3,3 0 0,0 4,10A3,3 0 0,0 7,13Z"/></svg></div><div class="tx" style="color:#212121">Elenco soggiorni</div><div class="ob"><svg width="25" height="22" viewBox="0 0 25 22" style="position:absolute;left:0;top:0"><path fill="#fff" d="M12.2,6.4H14.9V15.4H12.3V9.3L9.9,10.1V8.1Z"/></svg></div></div>
<div class="mi" style="top:72px"><div class="ic"><svg width="15" height="15" viewBox="0 0 24 24" ><path fill="#757575" d="M19,3H5A2,2 0 0,0 3,5V19A2,2 0 0,0 5,21H19A2,2 0 0,0 21,19V5A2,2 0 0,0 19,3M7,7H9V9H7V7M7,11H9V13H7V11M7,15H9V17H7V15M17,17H11V15H17V17M17,13H11V11H17V13M17,9H11V7H17V9Z"/></svg></div><div class="tx" style="color:#212121">Elenco conti</div><div class="ob"><svg width="25" height="22" viewBox="0 0 25 22" style="position:absolute;left:0;top:0"><path fill="#fff" d="M12.2,6.4H14.9V15.4H12.3V9.3L9.9,10.1V8.1Z"/></svg></div></div>
<div class="mi" style="top:104px"><div class="ic"><svg width="15" height="15" viewBox="0 0 24 24" ><path fill="#757575" d="M19,3H5A2,2 0 0,0 3,5V19A2,2 0 0,0 5,21H19A2,2 0 0,0 21,19V5A2,2 0 0,0 19,3M7,7H9V9H7V7M7,11H9V13H7V11M7,15H9V17H7V15M17,17H11V15H17V17M17,13H11V11H17V13M17,9H11V7H17V9Z"/></svg></div><div class="tx" style="color:#212121">Elenco conti opzionali</div><div class="ob"><svg width="25" height="22" viewBox="0 0 25 22" style="position:absolute;left:0;top:0"><path fill="#fff" d="M12.2,6.4H14.9V15.4H12.3V9.3L9.9,10.1V8.1Z"/></svg></div></div>
<div class="mi" style="top:136px"><div class="ic"><svg width="15" height="15" viewBox="0 0 24 24" ><path fill="#757575" d="M5,6H23V18H5V6M14,9A3,3 0 0,1 17,12A3,3 0 0,1 14,15A3,3 0 0,1 11,12A3,3 0 0,1 14,9M9,8A2,2 0 0,1 7,10V14A2,2 0 0,1 9,16H19A2,2 0 0,1 21,14V10A2,2 0 0,1 19,8H9M1,10H3V20H19V22H1V10Z"/></svg></div><div class="tx" style="color:#212121">Elenco movimenti di cassa</div><div class="ob"><svg width="25" height="22" viewBox="0 0 25 22" style="position:absolute;left:0;top:0"><path fill="#fff" d="M12.2,6.4H14.9V15.4H12.3V9.3L9.9,10.1V8.1Z"/></svg></div></div>
<div class="mi" style="top:168px"><div class="ic"><svg width="15" height="15" viewBox="0 0 24 24" ><path fill="#757575" d="M7,2H17V6H7V2M4,8H20L22,17H2L4,8M6,10V11H8V10H6M9,10V11H11V10H9M12,10V11H14V10H12M6,12V13H8V12H6M9,12V13H11V12H9M12,12V13H14V12H12M2,18H22V22H2V18Z"/></svg></div><div class="tx" style="color:#212121">Elenco casse</div><div class="ob"><svg width="25" height="22" viewBox="0 0 25 22" style="position:absolute;left:0;top:0"><path fill="#fff" d="M12.2,6.4H14.9V15.4H12.3V9.3L9.9,10.1V8.1Z"/></svg></div></div>
<div class="mi" style="top:200px"><div class="ic"><svg width="15" height="15" viewBox="0 0 24 24" ><g fill="#757575"><path fill-rule="evenodd" d="M4.5,1H22.5V17H4.5Z M7,4H20V17H7Z"/><rect x="8.5" y="6" width="10" height="4.5"/><rect x="1.5" y="15.5" width="21" height="7" rx="1.8"/></g></svg></div><div class="tx" style="color:#212121">Elenco documenti correlati</div><div class="ob"><svg width="25" height="22" viewBox="0 0 25 22" style="position:absolute;left:0;top:0"><path fill="#fff" d="M12.2,6.4H14.9V15.4H12.3V9.3L9.9,10.1V8.1Z"/></svg></div></div>
</div>
<div class="badge" style="left:140.3px;top:145.2px"><svg width="30" height="30" viewBox="0 0 30 30" style="position:absolute;left:0;top:0"><path fill="#fff" d="M15.1,5.8H18V21.7H15.1V9.7L10.7,11.1V8.5Z"/></svg></div>
<div class="badge" style="left:167.3px;top:351.3px"><svg width="30" height="30" viewBox="0 0 30 30" style="position:absolute;left:0;top:0"><path fill="none" stroke="#fff" stroke-width="2.6" stroke-linejoin="miter" d="M10.5,10.7C10.5,8 12.5,7 14.9,7C17.3,7 19.1,8.3 19.1,10.5C19.1,12.3 18,13.6 16.5,15.1L10.8,20.3H20.7"/></svg></div>
<div class="badge" style="left:289.7px;top:161px"><svg width="30" height="30" viewBox="0 0 30 30" style="position:absolute;left:0;top:0"><path fill="none" stroke="#fff" stroke-width="2.6" d="M10.6,10C10.8,7.9 12.5,6.8 14.8,6.8C17.3,6.8 18.8,8.1 18.8,10C18.8,12 17.2,13.1 14.9,13.1H13.4M14.9,13.1C17.6,13.1 19.1,14.4 19.1,16.5C19.1,18.8 17.3,19.8 14.8,19.8C12.4,19.8 10.6,18.7 10.5,16.7"/></svg></div>
<div class="badge" style="left:1322px;top:641.8px"><svg width="30" height="30" viewBox="0 0 30 30" style="position:absolute;left:0;top:0"><path fill="#fff" fill-rule="evenodd" d="M15.6,5.9H18.4V15.3H19.9V17.6H18.4V20.7H15.6V17.6H8.4L8.3,15.8Z M15.6,10L11.7,15.3H15.6Z"/></svg></div>
<div class="badge" style="left:1161.8px;top:589.5px"><svg width="30" height="30" viewBox="0 0 30 30" style="position:absolute;left:0;top:0"><path fill="none" stroke="#fff" stroke-width="2.6" d="M19.4,6.7H12.2L11.6,12.9C12.4,12.2 13.5,11.8 14.8,11.8C17.6,11.8 19,13.6 19,16.2C19,18.7 17.4,20.3 14.7,20.3C12.6,20.3 10.9,19.1 10.6,17.3"/></svg></div>
</body></html>
